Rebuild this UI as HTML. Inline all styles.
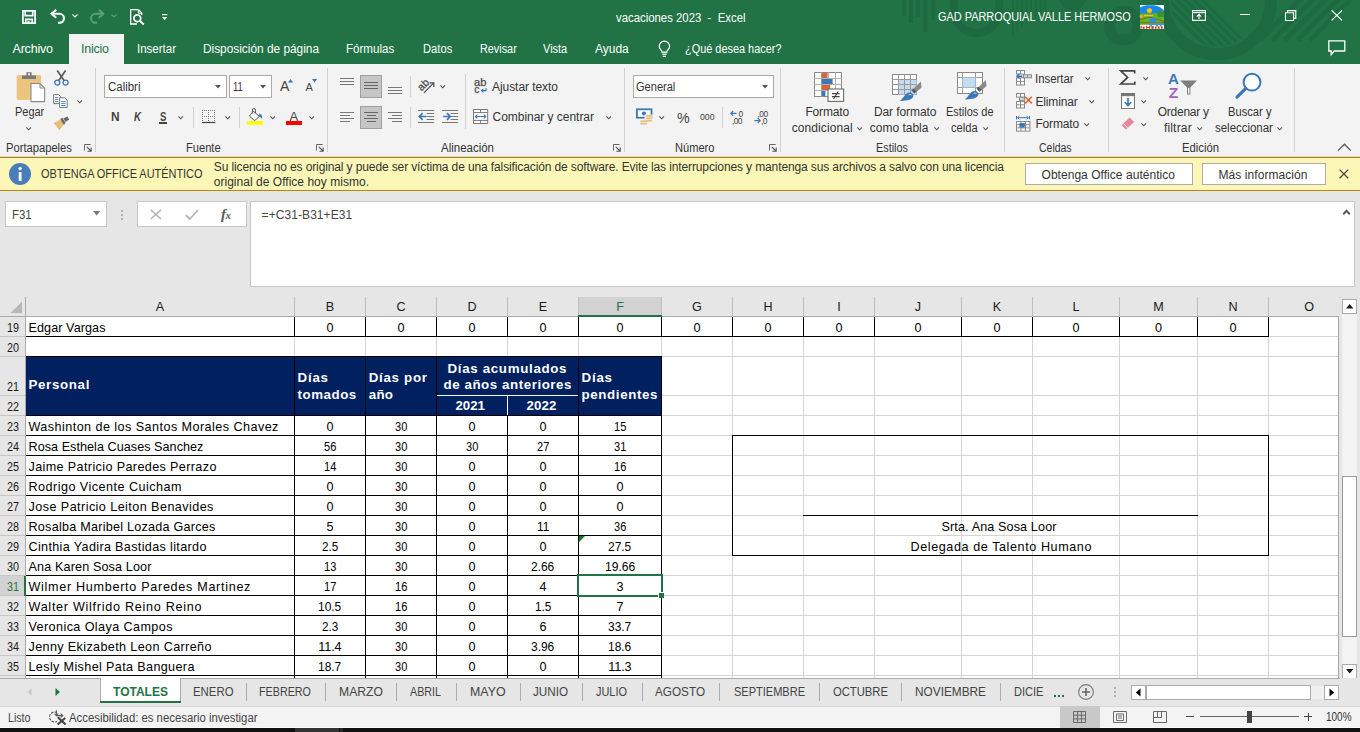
<!DOCTYPE html>
<html><head><meta charset="utf-8"><title>vacaciones 2023 - Excel</title>
<style>
html,body{margin:0;padding:0;}
body{width:1360px;height:732px;overflow:hidden;position:relative;background:#e6e6e6;font-family:"Liberation Sans",sans-serif;font-size:12px;color:#444;}
body div, body svg{position:absolute;}
svg{overflow:visible;}
</style></head><body>
<div style="left:0px;top:0px;width:1360px;height:64px;background:#217346;"></div>
<div style="left:0px;top:64px;width:1360px;height:93px;background:#f3f3f3;"></div>
<div style="left:0px;top:157px;width:1360px;height:34px;background:#fcf7b6;border-top:1px solid #b8860b;border-bottom:1px solid #b8860b;box-sizing:border-box;"></div>
<div style="left:0px;top:191px;width:1360px;height:126px;background:#e6e6e6;"></div>
<svg style="left:0;top:0;overflow:hidden" width="1360" height="64" viewBox="0 0 1360 64"><rect x="902.4" y="0" width="3.6" height="16" fill="#1d6a40"/><rect x="909" y="0" width="4.0" height="23" fill="#1d6a40"/><rect x="916" y="0" width="3.6" height="17" fill="#1d6a40"/><rect x="923.2" y="0" width="3.8" height="32" fill="#1d6a40"/><rect x="931.5" y="0" width="3.5" height="19.5" fill="#1d6a40"/><path d="M954 0 V10.5 A22.5 22.5 0 0 0 999 10.5 V0" fill="none" stroke="#1d6a40" stroke-width="8"/><rect x="1012.0" y="0" width="1.7" height="35.0" fill="#1d6a40"/><rect x="1016.6" y="0" width="1.7" height="31.4" fill="#1d6a40"/><rect x="1021.2" y="0" width="1.7" height="27.8" fill="#1d6a40"/><rect x="1025.8" y="0" width="1.7" height="24.2" fill="#1d6a40"/><rect x="1030.4" y="0" width="1.7" height="20.6" fill="#1d6a40"/><rect x="1035.0" y="0" width="1.7" height="17.0" fill="#1d6a40"/><rect x="1039.6" y="0" width="1.7" height="13.4" fill="#1d6a40"/><rect x="1044.2" y="0" width="1.7" height="9.8" fill="#1d6a40"/><circle cx="1072.6" cy="-3.5" r="14" fill="#1d6a40"/><circle cx="1123.7" cy="25.8" r="14.4" fill="none" stroke="#1d6a40" stroke-width="10.8"/><circle cx="1217" cy="0" r="54" fill="none" stroke="#1d6a40" stroke-width="12"/><clipPath id="cpin"><circle cx="1217" cy="0" r="46"/></clipPath><g clip-path="url(#cpin)"><path d="M1150.0 -10 L1220.0 60" stroke="#1d6a40" stroke-width="3"/><path d="M1158.5 -10 L1228.5 60" stroke="#1d6a40" stroke-width="3"/><path d="M1167.0 -10 L1237.0 60" stroke="#1d6a40" stroke-width="3"/><path d="M1175.5 -10 L1245.5 60" stroke="#1d6a40" stroke-width="3"/><path d="M1184.0 -10 L1254.0 60" stroke="#1d6a40" stroke-width="3"/><path d="M1192.5 -10 L1262.5 60" stroke="#1d6a40" stroke-width="3"/></g><path d="M1306.0 -6 L1260.0 40" stroke="#1d6a40" stroke-width="5"/><path d="M1318.5 -6 L1272.5 40" stroke="#1d6a40" stroke-width="5"/><path d="M1331.0 -6 L1285.0 40" stroke="#1d6a40" stroke-width="5"/><path d="M1343.5 -6 L1297.5 40" stroke="#1d6a40" stroke-width="5"/><path d="M1356.0 -6 L1310.0 40" stroke="#1d6a40" stroke-width="5"/></svg>
<svg style="left:22px;top:10px;" width="14" height="14" viewBox="0 0 14 14"><path d="M0.9 0.9 H13.1 V13.1 H0.9 Z" fill="none" stroke="#fff" stroke-width="1.8"/><path d="M3.2 1 V5.6 H10.8 V1" fill="none" stroke="#fff" stroke-width="1.7"/><path d="M3.8 13 V9.4 H10.2 V13" fill="none" stroke="#fff" stroke-width="1.7"/><rect x="5.6" y="10.8" width="2" height="2.4" fill="#fff"/></svg>
<svg style="left:50px;top:9px;" width="16" height="15" viewBox="0 0 16 15"><path d="M1.5 6 H9.5 A4.5 4.5 0 0 1 9.5 15 H8" fill="none" stroke="#fff" stroke-width="2.1" transform="translate(0,-1.2)"/><path d="M6.2 0.8 L1.6 4.8 L6.2 8.8" fill="none" stroke="#fff" stroke-width="2.1"/></svg>
<svg style="left:72px;top:14px;" width="6" height="4" viewBox="0 0 6 4"><path d="M0.5 0.5 L3 3 L5.5 0.5" fill="none" stroke="#fff" stroke-width="1.2"/></svg>
<svg style="left:89px;top:9px;" width="16" height="15" viewBox="0 0 16 15"><g transform="translate(16,0) scale(-1,1)"><path d="M1.5 6 H9.5 A4.5 4.5 0 0 1 9.5 15 H8" fill="none" stroke="#5c9e7c" stroke-width="1.9" transform="translate(0,-1.2)"/><path d="M6.2 0.8 L1.6 4.8 L6.2 8.8" fill="none" stroke="#5c9e7c" stroke-width="1.9"/></g></svg>
<svg style="left:111px;top:14px;" width="6" height="4" viewBox="0 0 6 4"><path d="M0.5 0.5 L3 3 L5.5 0.5" fill="none" stroke="#5c9e7c" stroke-width="1.2"/></svg>
<svg style="left:130px;top:9px;" width="15" height="16" viewBox="0 0 15 16"><path d="M8.5 0.7 H0.7 V15 H7" fill="none" stroke="#fff" stroke-width="1.3"/><path d="M8.5 0.7 L11.7 4 V6" fill="none" stroke="#fff" stroke-width="1.3"/><path d="M8.3 1 V4.2 H11.4" fill="none" stroke="#fff" stroke-width="1"/><circle cx="7.3" cy="9.3" r="3.4" fill="none" stroke="#fff" stroke-width="1.7"/><path d="M9.8 11.8 L13.8 15.4" stroke="#fff" stroke-width="2"/></svg>
<svg style="left:162px;top:14px;" width="6" height="7" viewBox="0 0 6 7"><path d="M0 0.6 H5.4" stroke="#fff" stroke-width="1.2"/><path d="M0 3 H5.4 L2.7 6 Z" fill="#fff"/></svg>
<div style="top:9.84px;height:16px;line-height:16px;font-size:12px;color:#fff;white-space:pre;left:615.50px;transform:scaleX(0.9471);transform-origin:0 0;">vacaciones 2023  -  Excel</div>
<div style="top:9.17px;height:16px;line-height:16px;font-size:12.5px;color:#fff;white-space:pre;left:938.30px;transform:scaleX(0.8733);transform-origin:0 0;">GAD PARROQUIAL VALLE HERMOSO</div>
<svg style="left:1140px;top:5px;" width="24" height="24" viewBox="0 0 24 24"><rect x="0" y="0" width="24" height="24" fill="#fff"/>
<path d="M0 2.4 Q3 0.4 7 0.2 H14 Q20 1 24 5.4 V10 H0 Z" fill="#1488f2"/>
<rect x="0" y="8.4" width="24" height="11.4" fill="#5cb521"/>
<path d="M17 6 L19.6 4.4 L21.4 6 L24 7 V12 H18 Z" fill="#3f8f3a"/>
<circle cx="9.4" cy="5.6" r="2.7" fill="#f4b21e"/><circle cx="9.6" cy="5.4" r="1.1" fill="#f7e04a"/>
<circle cx="1.4" cy="11.6" r="1.8" fill="#f0a23a"/>
<path d="M4 10.6 H13" stroke="#f4c430" stroke-width="1.4"/>
<path d="M0 14.6 L10 12 L24 16.4" fill="none" stroke="#8a5a2a" stroke-width="0.9"/>
<rect x="9.6" y="13.2" width="6.4" height="3.8" fill="#2f8fe6"/>
<path d="M0 17.6 L24 18" stroke="#8a5a2a" stroke-width="0.9"/>
<rect x="9" y="18.4" width="15" height="2.2" fill="#3f96ea"/>
<rect x="0" y="20.4" width="24" height="3.6" fill="#fff"/>
<g fill="#d92a1c"><rect x="0.4" y="20.8" width="1.2" height="3"/><rect x="2.6" y="21.6" width="2" height="2.2"/><rect x="6" y="20.8" width="1.2" height="3"/><rect x="7.2" y="22" width="1.8" height="0.9"/><rect x="9" y="20.8" width="1.2" height="3"/><rect x="11.4" y="21.2" width="2.4" height="2.6"/><rect x="15" y="21.6" width="1.6" height="2.2"/><rect x="18" y="21.4" width="1.6" height="2.4"/><rect x="21" y="21.4" width="1.6" height="2.4"/></g>
<g fill="#2c6b2f"><rect x="10.6" y="20.4" width="1.4" height="1"/><rect x="16" y="20.4" width="2" height="1"/><rect x="20" y="20.4" width="1.6" height="1"/></g></svg>
<svg style="left:1192px;top:10px;" width="14" height="11" viewBox="0 0 14 11"><path d="M0.6 0.6 H13.4 V10.4 H0.6 Z" fill="none" stroke="#fff" stroke-width="1.1"/><path d="M0.6 2.6 H13.4" stroke="#fff" stroke-width="1.1"/><path d="M7 9 V4.6 M4.8 6.6 L7 4.4 L9.2 6.6" fill="none" stroke="#fff" stroke-width="1.1"/></svg>
<div style="left:1240px;top:14px;width:10px;height:1px;background:#fff;"></div>
<svg style="left:1285px;top:10px;" width="12" height="11" viewBox="0 0 12 11"><path d="M0.5 2.8 H8.6 V10.5 H0.5 Z" fill="none" stroke="#fff" stroke-width="1.1"/><path d="M2.6 2.6 V0.6 H10.8 V8.4 H8.8" fill="none" stroke="#fff" stroke-width="1.1"/></svg>
<svg style="left:1331px;top:10px;" width="12" height="11" viewBox="0 0 12 11"><path d="M0.6 0.4 L11 10.4 M11 0.4 L0.6 10.4" stroke="#fff" stroke-width="1.2"/></svg>
<svg style="left:1328px;top:40px;" width="18" height="16" viewBox="0 0 18 16"><path d="M0.8 0.8 H16.8 V11 H6.2 L3.2 14.6 V11 H0.8 Z" fill="none" stroke="#fff" stroke-width="1.3"/></svg>
<div style="left:69px;top:34px;width:55px;height:30px;background:#f3f3f3;"></div>
<div style="top:40.67px;height:16px;line-height:16px;font-size:12.5px;color:#fff;white-space:pre;left:12.50px;letter-spacing:-0.198px;">Archivo</div>
<div style="top:40.67px;height:16px;line-height:16px;font-size:12.5px;color:#217346;white-space:pre;left:81.00px;letter-spacing:-0.237px;">Inicio</div>
<div style="top:40.67px;height:16px;line-height:16px;font-size:12.5px;color:#fff;white-space:pre;left:137.00px;transform:scaleX(0.9204);transform-origin:0 0;">Insertar</div>
<div style="top:40.67px;height:16px;line-height:16px;font-size:12.5px;color:#fff;white-space:pre;left:203.00px;transform:scaleX(0.9484);transform-origin:0 0;">Disposición de página</div>
<div style="top:40.67px;height:16px;line-height:16px;font-size:12.5px;color:#fff;white-space:pre;left:346.25px;transform:scaleX(0.9262);transform-origin:0 0;">Fórmulas</div>
<div style="top:40.67px;height:16px;line-height:16px;font-size:12.5px;color:#fff;white-space:pre;left:422.50px;transform:scaleX(0.8957);transform-origin:0 0;">Datos</div>
<div style="top:40.67px;height:16px;line-height:16px;font-size:12.5px;color:#fff;white-space:pre;left:479.50px;transform:scaleX(0.8673);transform-origin:0 0;">Revisar</div>
<div style="top:40.67px;height:16px;line-height:16px;font-size:12.5px;color:#fff;white-space:pre;left:543.25px;transform:scaleX(0.8788);transform-origin:0 0;">Vista</div>
<div style="top:40.67px;height:16px;line-height:16px;font-size:12.5px;color:#fff;white-space:pre;left:595.00px;transform:scaleX(0.9574);transform-origin:0 0;">Ayuda</div>
<div style="top:40.67px;height:16px;line-height:16px;font-size:12.5px;color:#fff;white-space:pre;left:684.50px;transform:scaleX(0.8733);transform-origin:0 0;">¿Qué desea hacer?</div>
<svg style="left:658px;top:41px;" width="13" height="17" viewBox="0 0 13 17"><path d="M4 11.2 C4 9 1.2 8.2 1.2 5.4 A5.2 5.2 0 0 1 11.6 5.4 C11.6 8.2 8.8 9 8.8 11.2 Z" fill="none" stroke="#fff" stroke-width="1.2"/><path d="M4.2 13.2 H8.6 M4.8 15.3 H8" stroke="#fff" stroke-width="1.2"/></svg>
<div style="left:95px;top:68px;width:1px;height:84px;background:#d0d0d0;"></div>
<div style="left:327px;top:68px;width:1px;height:84px;background:#d0d0d0;"></div>
<div style="left:624px;top:68px;width:1px;height:84px;background:#d0d0d0;"></div>
<div style="left:780px;top:68px;width:1px;height:84px;background:#d0d0d0;"></div>
<div style="left:1004px;top:68px;width:1px;height:84px;background:#d0d0d0;"></div>
<div style="left:1108px;top:68px;width:1px;height:84px;background:#d0d0d0;"></div>
<div style="left:1294px;top:68px;width:1px;height:84px;background:#d0d0d0;"></div>
<div style="left:0px;top:156px;width:1360px;height:1px;background:#d8d8d8;"></div>
<svg style="left:16px;top:71px;" width="30" height="32" viewBox="0 0 30 32"><rect x="0.7" y="4" width="24.4" height="25" rx="1.6" fill="#ebc47e"/>
<path d="M6 8 V4.6 H10.4 V1.2 H15.6 V4.6 H20 V8 Z" fill="#7a7a7a"/><rect x="12" y="2.4" width="2" height="1.8" fill="#f3f3f3"/>
<path d="M15 12.5 H24 L28.6 17 V30.6 H15 Z" fill="#fff" stroke="#8a8a8a" stroke-width="1.1"/><path d="M24 12.6 V17 H28.5" fill="none" stroke="#8a8a8a" stroke-width="1"/></svg>
<div style="top:104.44px;height:16px;line-height:16px;font-size:12px;color:#333;white-space:pre;left:14.80px;transform:scaleX(0.9122);transform-origin:0 0;">Pegar</div>
<svg style="left:26.3px;top:127px;" width="6.4" height="3.8" viewBox="0 0 6.4 3.8"><path d="M0.4 0.4 L2.70 2.80 L5.00 0.4" fill="none" stroke="#555" stroke-width="1.1"/></svg>
<svg style="left:54px;top:70px;" width="15" height="16" viewBox="0 0 15 16"><path d="M3.2 0.6 L10.4 11 M11.6 0.6 L4.4 11" stroke="#5a5a5a" stroke-width="1.7" fill="none"/>
<circle cx="3.3" cy="12.6" r="2.5" fill="none" stroke="#3b78b8" stroke-width="1.3"/><circle cx="11.6" cy="12.6" r="2.5" fill="none" stroke="#3b78b8" stroke-width="1.3"/></svg>
<svg style="left:53px;top:94px;" width="15" height="14" viewBox="0 0 15 14"><path d="M0.6 0.6 H5.6 L7.6 2.6 V9.6 H0.6 Z" fill="#fff" stroke="#777" stroke-width="1"/>
<path d="M2 3.6 H5.4 M2 5.6 H5.4 M2 7.6 H5.4" stroke="#3b78b8" stroke-width="0.9"/>
<path d="M6.6 3.8 H11.8 L14.2 6.2 V13.4 H6.6 Z" fill="#fff" stroke="#777" stroke-width="1"/>
<path d="M8.2 7.6 H12.6 M8.2 9.6 H12.6 M8.2 11.5 H12.6" stroke="#3b78b8" stroke-width="0.9"/></svg>
<svg style="left:76.6px;top:100.3px;" width="6.4" height="3.8" viewBox="0 0 6.4 3.8"><path d="M0.4 0.4 L2.70 2.80 L5.00 0.4" fill="none" stroke="#555" stroke-width="1.1"/></svg>
<svg style="left:53px;top:116px;" width="17" height="15" viewBox="0 0 17 15"><path d="M0.6 7 L7.6 3.4 L10.6 8.6 L6.4 14.2 Z" fill="#e9bd73"/>
<path d="M7.2 3 L9.4 1.8 L12.6 7.2 L10.6 8.8 Z" fill="#6a6a6a"/>
<path d="M10.4 2.6 L14.2 0.4 L16.2 3.6 L12.4 6 Z" fill="#6a6a6a"/></svg>
<div style="top:139.84px;height:16px;line-height:16px;font-size:12px;color:#333;white-space:pre;left:6.40px;transform:scaleX(0.9320);transform-origin:0 0;">Portapapeles</div>
<svg style="left:84px;top:144px;" width="8" height="8" viewBox="0 0 8 8"><path d="M0.5 6.6 V0.5 H6.6" fill="none" stroke="#666" stroke-width="1"/><path d="M2.8 2.8 L7 7 M7.2 3.4 V7.2 H3.4" fill="none" stroke="#555" stroke-width="1.1"/></svg>
<div style="left:104px;top:75px;width:123px;height:23px;background:#fff;border:1px solid #ababab;box-sizing:border-box;"></div>
<div style="top:78.54px;height:16px;line-height:16px;font-size:12px;color:#333;white-space:pre;left:107.50px;transform:scaleX(0.9553);transform-origin:0 0;">Calibri</div>
<svg style="left:215px;top:85px;" width="7" height="4" viewBox="0 0 7 4"><path d="M0 0 H6 L3 3.4 Z" fill="#555"/></svg>
<div style="left:229px;top:75px;width:43px;height:23px;background:#fff;border:1px solid #ababab;box-sizing:border-box;"></div>
<div style="top:78.54px;height:16px;line-height:16px;font-size:12px;color:#333;white-space:pre;left:232.60px;transform:scaleX(0.7871);transform-origin:0 0;">11</div>
<svg style="left:260px;top:85px;" width="7" height="4" viewBox="0 0 7 4"><path d="M0 0 H6 L3 3.4 Z" fill="#555"/></svg>
<div style="top:78.45px;height:16px;line-height:16px;font-size:14px;color:#444;white-space:pre;left:280.00px;letter-spacing:0.655px;">A</div>
<svg style="left:288px;top:79px;" width="6" height="4" viewBox="0 0 6 4"><path d="M0 3.4 L2.6 0 L5.2 3.4 Z" fill="#3b78b8"/></svg>
<div style="top:79.49px;height:16px;line-height:16px;font-size:11px;color:#444;white-space:pre;left:305.50px;letter-spacing:0.157px;">A</div>
<svg style="left:312px;top:79px;" width="6" height="4" viewBox="0 0 6 4"><path d="M0 0 L5.2 0 L2.6 3.4 Z" fill="#3b78b8"/></svg>
<div style="top:109.17px;height:16px;line-height:16px;font-size:12.5px;color:#444;white-space:pre;font-weight:bold;left:110.60px;transform:scaleX(0.9522);transform-origin:0 0;">N</div>
<div style="top:109.17px;height:16px;line-height:16px;font-size:12.5px;color:#444;white-space:pre;font-weight:bold;font-style:italic;left:134.40px;transform:scaleX(0.7745);transform-origin:0 0;">K</div>
<div style="top:109.17px;height:16px;line-height:16px;font-size:12.5px;color:#444;white-space:pre;font-weight:bold;left:159.60px;transform:scaleX(0.7670);transform-origin:0 0;">S</div>
<div style="left:159px;top:122.4px;width:8px;height:1.3px;background:#444;"></div>
<svg style="left:178.4px;top:116px;" width="6.4" height="3.8" viewBox="0 0 6.4 3.8"><path d="M0.4 0.4 L2.70 2.80 L5.00 0.4" fill="none" stroke="#555" stroke-width="1.1"/></svg>
<div style="left:193px;top:107px;width:1px;height:21px;background:#d0d0d0;"></div>
<svg style="left:202px;top:110px;" width="14" height="13" viewBox="0 0 14 13"><path d="M0 0.5 H13" stroke="#777" stroke-width="1" stroke-dasharray="1 1"/><path d="M0 6.5 H13" stroke="#777" stroke-width="1" stroke-dasharray="1 1"/><path d="M0.5 0 V12" stroke="#777" stroke-width="1" stroke-dasharray="1 1"/><path d="M6.5 0 V12" stroke="#777" stroke-width="1" stroke-dasharray="1 1"/><path d="M12.5 0 V12" stroke="#777" stroke-width="1" stroke-dasharray="1 1"/><path d="M0 12.5 H13.4" stroke="#444" stroke-width="1.2"/></svg>
<svg style="left:224.6px;top:116px;" width="6.4" height="3.8" viewBox="0 0 6.4 3.8"><path d="M0.4 0.4 L2.70 2.80 L5.00 0.4" fill="none" stroke="#555" stroke-width="1.1"/></svg>
<div style="left:239px;top:107px;width:1px;height:21px;background:#d0d0d0;"></div>
<svg style="left:247px;top:108px;" width="17" height="17" viewBox="0 0 17 17"><path d="M6.4 3.4 L12.4 8.4 L7.6 12.6 L2.4 8 Z" fill="#fff" stroke="#555" stroke-width="1"/>
<path d="M5.4 5.4 V2 A1.5 1.5 0 0 1 8.4 2 V5" fill="none" stroke="#555" stroke-width="1"/>
<path d="M12.2 5.6 C14.6 6.2 15.8 8.2 15 11 C14 9.4 13.2 8.8 12 8.4 Z" fill="#3b78b8"/>
<rect x="0" y="13" width="16" height="3.8" fill="#ffff00"/></svg>
<svg style="left:270.4px;top:116px;" width="6.4" height="3.8" viewBox="0 0 6.4 3.8"><path d="M0.4 0.4 L2.70 2.80 L5.00 0.4" fill="none" stroke="#555" stroke-width="1.1"/></svg>
<div style="top:108.50px;height:16px;line-height:16px;font-size:13px;color:#444;white-space:pre;left:289.60px;letter-spacing:0.522px;">A</div>
<div style="left:286px;top:121px;width:16px;height:3.8px;background:#ff0000;"></div>
<svg style="left:309.3px;top:116px;" width="6.4" height="3.8" viewBox="0 0 6.4 3.8"><path d="M0.4 0.4 L2.70 2.80 L5.00 0.4" fill="none" stroke="#555" stroke-width="1.1"/></svg>
<div style="top:139.84px;height:16px;line-height:16px;font-size:12px;color:#333;white-space:pre;left:185.70px;transform:scaleX(0.9264);transform-origin:0 0;">Fuente</div>
<svg style="left:316px;top:144px;" width="8" height="8" viewBox="0 0 8 8"><path d="M0.5 6.6 V0.5 H6.6" fill="none" stroke="#666" stroke-width="1"/><path d="M2.8 2.8 L7 7 M7.2 3.4 V7.2 H3.4" fill="none" stroke="#555" stroke-width="1.1"/></svg>
<div style="left:340px;top:78px;width:14px;height:1px;background:#777;"></div>
<div style="left:340px;top:81px;width:14px;height:1px;background:#777;"></div>
<div style="left:340px;top:84px;width:14px;height:1px;background:#777;"></div>
<div style="left:360px;top:75px;width:22px;height:23px;background:#c6c6c6;border:1px solid #a0a0a0;box-sizing:border-box;"></div>
<div style="left:364px;top:82px;width:14px;height:1px;background:#666;"></div>
<div style="left:364px;top:85px;width:14px;height:1px;background:#666;"></div>
<div style="left:364px;top:88px;width:14px;height:1px;background:#666;"></div>
<div style="left:388px;top:87px;width:14px;height:1px;background:#777;"></div>
<div style="left:388px;top:90px;width:14px;height:1px;background:#777;"></div>
<div style="left:388px;top:93px;width:14px;height:1px;background:#777;"></div>
<div style="left:410px;top:76px;width:1px;height:21px;background:#d0d0d0;"></div>
<svg style="left:417px;top:78px;" width="18" height="16" viewBox="0 0 18 16"><g transform="rotate(-45 6.6 6.6)"><text x="0.2" y="10" font-family="Liberation Sans" font-size="10.6" fill="#4a4a4a" stroke="#4a4a4a" stroke-width="0.25">ab</text></g>
<path d="M7 14.8 L16.4 5.2" stroke="#4a4a4a" stroke-width="1.2"/><path d="M12.6 4.8 H16.8 V9" fill="none" stroke="#4a4a4a" stroke-width="1.2"/></svg>
<svg style="left:439.6px;top:85px;" width="6.4" height="3.8" viewBox="0 0 6.4 3.8"><path d="M0.4 0.4 L2.70 2.80 L5.00 0.4" fill="none" stroke="#555" stroke-width="1.1"/></svg>
<div style="left:465px;top:74px;width:1px;height:55px;background:#d0d0d0;"></div>
<svg style="left:474px;top:78px;" width="14" height="16" viewBox="0 0 14 16"><text x="0" y="8" font-family="Liberation Sans" font-size="10.4" fill="#4a4a4a" stroke="#4a4a4a" stroke-width="0.25" textLength="12.4" lengthAdjust="spacingAndGlyphs">ab</text>
<text x="0.2" y="15" font-family="Liberation Sans" font-size="10.4" fill="#4a4a4a" stroke="#4a4a4a" stroke-width="0.25">c</text>
<path d="M12 10 V12.6 H7.6 M9.4 10.8 L7.4 12.6 L9.4 14.4" fill="none" stroke="#3b78b8" stroke-width="1.1"/></svg>
<div style="top:78.54px;height:16px;line-height:16px;font-size:12px;color:#333;white-space:pre;left:492.00px;letter-spacing:-0.057px;">Ajustar texto</div>
<div style="left:340px;top:112px;width:14px;height:1px;background:#777;"></div>
<div style="left:340px;top:115px;width:10px;height:1px;background:#777;"></div>
<div style="left:340px;top:118px;width:14px;height:1px;background:#777;"></div>
<div style="left:340px;top:121px;width:10px;height:1px;background:#777;"></div>
<div style="left:360px;top:106px;width:22px;height:23px;background:#c6c6c6;border:1px solid #a0a0a0;box-sizing:border-box;"></div>
<div style="left:364px;top:112px;width:14px;height:1px;background:#666;"></div>
<div style="left:366.5px;top:115px;width:9.0px;height:1px;background:#666;"></div>
<div style="left:364px;top:118px;width:14px;height:1px;background:#666;"></div>
<div style="left:366.5px;top:121px;width:9.0px;height:1px;background:#666;"></div>
<div style="left:388px;top:112px;width:14px;height:1px;background:#777;"></div>
<div style="left:392px;top:115px;width:10px;height:1px;background:#777;"></div>
<div style="left:388px;top:118px;width:14px;height:1px;background:#777;"></div>
<div style="left:392px;top:121px;width:10px;height:1px;background:#777;"></div>
<div style="left:410px;top:107px;width:1px;height:21px;background:#d0d0d0;"></div>
<svg style="left:418px;top:110px;" width="17" height="14" viewBox="0 0 17 14"><path d="M0 0.5 H16.2 M0 12.5 H16.2 M8.6 3.5 H16.2 M8.6 6.5 H16.2 M8.6 9.5 H16.2" stroke="#777" stroke-width="1"/><path d="M8.4 6.5 H1.6 M4.6 3.2 L1.4 6.5 L4.6 9.8" fill="none" stroke="#3b78b8" stroke-width="1.7"/></svg>
<svg style="left:442px;top:110px;" width="17" height="14" viewBox="0 0 17 14"><path d="M0 0.5 H16.2 M0 12.5 H16.2 M8.6 3.5 H16.2 M8.6 6.5 H16.2 M8.6 9.5 H16.2" stroke="#777" stroke-width="1"/><g transform="translate(9.6,0) scale(-1,1)"><path d="M8.4 6.5 H1.6 M4.6 3.2 L1.4 6.5 L4.6 9.8" fill="none" stroke="#3b78b8" stroke-width="1.7"/></g></svg>
<svg style="left:473px;top:109px;" width="16" height="15" viewBox="0 0 16 15"><path d="M0.5 0.5 H14.7 V14.5 H0.5 Z" fill="#fff" stroke="#777" stroke-width="1"/>
<path d="M0.5 3.6 H14.7 M0.5 11.4 H14.7 M7.6 0.5 V3.6 M7.6 11.4 V14.5" stroke="#777" stroke-width="1"/>
<path d="M2.4 7.5 H12.8 M4.4 5.6 L2.4 7.5 L4.4 9.4 M10.8 5.6 L12.8 7.5 L10.8 9.4" fill="none" stroke="#3b78b8" stroke-width="1.1"/></svg>
<div style="top:109.04px;height:16px;line-height:16px;font-size:12px;color:#333;white-space:pre;left:492.50px;letter-spacing:-0.031px;">Combinar y centrar</div>
<svg style="left:605.6px;top:116px;" width="6.4" height="3.8" viewBox="0 0 6.4 3.8"><path d="M0.4 0.4 L2.70 2.80 L5.00 0.4" fill="none" stroke="#555" stroke-width="1.1"/></svg>
<div style="top:139.84px;height:16px;line-height:16px;font-size:12px;color:#333;white-space:pre;left:441.00px;transform:scaleX(0.9570);transform-origin:0 0;">Alineación</div>
<svg style="left:613px;top:144px;" width="8" height="8" viewBox="0 0 8 8"><path d="M0.5 6.6 V0.5 H6.6" fill="none" stroke="#666" stroke-width="1"/><path d="M2.8 2.8 L7 7 M7.2 3.4 V7.2 H3.4" fill="none" stroke="#555" stroke-width="1.1"/></svg>
<div style="left:633px;top:75px;width:141px;height:23px;background:#fff;border:1px solid #ababab;box-sizing:border-box;"></div>
<div style="top:78.54px;height:16px;line-height:16px;font-size:12px;color:#333;white-space:pre;left:636.20px;transform:scaleX(0.9206);transform-origin:0 0;">General</div>
<svg style="left:762px;top:85px;" width="7" height="4" viewBox="0 0 7 4"><path d="M0 0 H6 L3 3.4 Z" fill="#555"/></svg>
<svg style="left:636px;top:108px;" width="17" height="18" viewBox="0 0 17 18"><rect x="0.9" y="1.3" width="14.6" height="8.4" fill="#fff" stroke="#3b78b8" stroke-width="1.8"/>
<circle cx="8" cy="5.5" r="2.1" fill="#3b78b8"/>
<rect x="8.6" y="6.6" width="8" height="7.8" fill="#f3f3f3"/>
<g fill="#e8be78"><rect x="9.6" y="7" width="6.6" height="1.7" rx="0.8"/><rect x="9.6" y="9.4" width="6.6" height="1.7" rx="0.8"/><rect x="9.6" y="11.8" width="6.6" height="1.7" rx="0.8"/>
<rect x="4.2" y="12.4" width="6.8" height="1.7" rx="0.8"/><rect x="4.2" y="14.8" width="6.8" height="1.7" rx="0.8"/></g></svg>
<svg style="left:659.3px;top:115.7px;" width="6.4" height="3.8" viewBox="0 0 6.4 3.8"><path d="M0.4 0.4 L2.70 2.80 L5.00 0.4" fill="none" stroke="#555" stroke-width="1.1"/></svg>
<div style="top:109.83px;height:16px;line-height:16px;font-size:15.5px;color:#444;white-space:pre;left:677.40px;transform:scaleX(0.9206);transform-origin:0 0;">%</div>
<div style="top:108.57px;height:16px;line-height:16px;font-size:9.6px;color:#444;white-space:pre;left:699.60px;transform:scaleX(0.9120);transform-origin:0 0;">000</div>
<div style="left:722px;top:107px;width:1px;height:21px;background:#d0d0d0;"></div>
<svg style="left:730px;top:110px;" width="15" height="15" viewBox="0 0 15 15"><text x="8.4" y="6.8" font-family="Liberation Sans" font-size="8.4" fill="#444" letter-spacing="-0.6">0</text><text x="2" y="14" font-family="Liberation Sans" font-size="8.4" fill="#444" letter-spacing="-0.6">,00</text><path d="M6.6 3.4 H0.8 M3.2 1 L0.8 3.4 L3.2 5.8" fill="none" stroke="#3b78b8" stroke-width="1.2"/></svg>
<svg style="left:754px;top:110px;" width="15" height="15" viewBox="0 0 15 15"><text x="3.6" y="6.8" font-family="Liberation Sans" font-size="8.4" fill="#444" letter-spacing="-0.6">,00</text><text x="7" y="14" font-family="Liberation Sans" font-size="8.4" fill="#444" letter-spacing="-0.6">,0</text><path d="M0.4 10.6 H6.2 M3.8 8.2 L6.2 10.6 L3.8 13" fill="none" stroke="#3b78b8" stroke-width="1.2"/></svg>
<div style="top:139.84px;height:16px;line-height:16px;font-size:12px;color:#333;white-space:pre;left:674.80px;transform:scaleX(0.9229);transform-origin:0 0;">Número</div>
<svg style="left:769px;top:144px;" width="8" height="8" viewBox="0 0 8 8"><path d="M0.5 6.6 V0.5 H6.6" fill="none" stroke="#666" stroke-width="1"/><path d="M2.8 2.8 L7 7 M7.2 3.4 V7.2 H3.4" fill="none" stroke="#555" stroke-width="1.1"/></svg>
<svg style="left:814px;top:72px;" width="30" height="30" viewBox="0 0 30 30"><rect x="0.5" y="0.5" width="27" height="24" fill="#fff" stroke="#8a8a8a"/><path d="M0.5 6.5 H27.5" stroke="#b0b0b0" stroke-width="1"/><path d="M0.5 12.5 H27.5" stroke="#b0b0b0" stroke-width="1"/><path d="M0.5 18.5 H27.5" stroke="#b0b0b0" stroke-width="1"/><path d="M7.5 0.5 V24.5" stroke="#b0b0b0" stroke-width="1"/><path d="M14.5 0.5 V24.5" stroke="#b0b0b0" stroke-width="1"/><path d="M21.5 0.5 V24.5" stroke="#b0b0b0" stroke-width="1"/><rect x="7.6" y="1" width="6" height="5" fill="#d9623b"/><rect x="7.6" y="7" width="11" height="5" fill="#3b78b8"/><rect x="7.6" y="13" width="8.6" height="5" fill="#d9623b"/><rect x="7.6" y="19" width="3.8" height="5" fill="#3b78b8"/><rect x="14" y="17" width="15.6" height="12.4" fill="#fff" stroke="#6a6a6a" stroke-width="1.1"/><path d="M18 21.6 H25.6 M18 24.6 H25.6 M24.2 19.4 L19.6 27" stroke="#444" stroke-width="1.1"/></svg>
<div style="top:104.44px;height:16px;line-height:16px;font-size:12px;color:#333;white-space:pre;left:805.40px;letter-spacing:-0.162px;">Formato</div>
<div style="top:120.24px;height:16px;line-height:16px;font-size:12px;color:#333;white-space:pre;left:791.70px;letter-spacing:0.097px;">condicional</div>
<svg style="left:857.4px;top:127px;" width="6.4" height="3.8" viewBox="0 0 6.4 3.8"><path d="M0.4 0.4 L2.70 2.80 L5.00 0.4" fill="none" stroke="#555" stroke-width="1.1"/></svg>
<svg style="left:892px;top:74px;" width="32" height="30" viewBox="0 0 32 30"><rect x="0.5" y="0.5" width="24" height="20" fill="#fff" stroke="#8a8a8a"/><rect x="6.5" y="5.5" width="18" height="15" fill="#c5dcf0"/><path d="M0.5 5.5 H24.5" stroke="#9a9a9a" stroke-width="1"/><path d="M0.5 10.5 H24.5" stroke="#9a9a9a" stroke-width="1"/><path d="M0.5 15.5 H24.5" stroke="#9a9a9a" stroke-width="1"/><path d="M6.5 0.5 V20.5" stroke="#9a9a9a" stroke-width="1"/><path d="M12.5 0.5 V20.5" stroke="#9a9a9a" stroke-width="1"/><path d="M18.5 0.5 V20.5" stroke="#9a9a9a" stroke-width="1"/><g transform="translate(7.4,5)"><path d="M14.2 9.6 L21.4 2.6 L22.2 8.6 L17 13 Z" fill="#8a8a8a"/>
<path d="M12 11.4 L14.2 9.4 L17.2 12.6 L15 14.4 Z" fill="#5a5a5a"/>
<path d="M0.4 22 C4 20 5.2 14.4 9.6 13.6 C13 13 15 16 13.4 18.6 C11.4 21.6 5 22 0.4 22 Z" fill="#3b78b8"/>
<path d="M8.4 16.4 C9.6 14.8 12 15 12.4 16.6 C11.2 16 9.8 16 8.4 16.4 Z" fill="#fff"/></g></svg>
<div style="top:104.44px;height:16px;line-height:16px;font-size:12px;color:#333;white-space:pre;left:873.90px;letter-spacing:-0.076px;">Dar formato</div>
<div style="top:120.24px;height:16px;line-height:16px;font-size:12px;color:#333;white-space:pre;left:869.80px;letter-spacing:-0.012px;">como tabla</div>
<svg style="left:933.6px;top:127px;" width="6.4" height="3.8" viewBox="0 0 6.4 3.8"><path d="M0.4 0.4 L2.70 2.80 L5.00 0.4" fill="none" stroke="#555" stroke-width="1.1"/></svg>
<svg style="left:957px;top:72px;" width="32" height="30" viewBox="0 0 32 30"><rect x="0.5" y="0.5" width="25" height="21" fill="#fff" stroke="#8a8a8a"/><path d="M0.5 5.5 H25.5 M0.5 15.5 H25.5 M5.5 0.5 V21.5 M18.5 0.5 V21.5" stroke="#9a9a9a" stroke-width="1"/><rect x="5.5" y="5.5" width="13" height="10" fill="#c5dcf0" stroke="#9ab8d8" stroke-width="0.6"/><g transform="translate(7.4,5.4)"><path d="M14.2 9.6 L21.4 2.6 L22.2 8.6 L17 13 Z" fill="#8a8a8a"/>
<path d="M12 11.4 L14.2 9.4 L17.2 12.6 L15 14.4 Z" fill="#5a5a5a"/>
<path d="M0.4 22 C4 20 5.2 14.4 9.6 13.6 C13 13 15 16 13.4 18.6 C11.4 21.6 5 22 0.4 22 Z" fill="#3b78b8"/>
<path d="M8.4 16.4 C9.6 14.8 12 15 12.4 16.6 C11.2 16 9.8 16 8.4 16.4 Z" fill="#fff"/></g></svg>
<div style="top:104.44px;height:16px;line-height:16px;font-size:12px;color:#333;white-space:pre;left:945.90px;transform:scaleX(0.9131);transform-origin:0 0;">Estilos de</div>
<div style="top:120.24px;height:16px;line-height:16px;font-size:12px;color:#333;white-space:pre;left:951.00px;transform:scaleX(0.9300);transform-origin:0 0;">celda</div>
<svg style="left:983.4px;top:127px;" width="6.4" height="3.8" viewBox="0 0 6.4 3.8"><path d="M0.4 0.4 L2.70 2.80 L5.00 0.4" fill="none" stroke="#555" stroke-width="1.1"/></svg>
<div style="top:139.84px;height:16px;line-height:16px;font-size:12px;color:#333;white-space:pre;left:876.00px;transform:scaleX(0.9055);transform-origin:0 0;">Estilos</div>
<svg style="left:1016px;top:70px;" width="17" height="16" viewBox="0 0 17 16"><rect x="0.5" y="0.5" width="8" height="3.6" fill="#fff" stroke="#8a8a8a" stroke-width="1"/><path d="M4.50 0.5 V4.1" stroke="#8a8a8a" stroke-width="1"/><rect x="0.5" y="7.8" width="8" height="7.2" fill="#fff" stroke="#8a8a8a" stroke-width="1"/><path d="M4.50 7.8 V15.0" stroke="#8a8a8a" stroke-width="1"/><path d="M0.5 11.40 H8.5" stroke="#8a8a8a" stroke-width="1"/><rect x="7.5" y="4.8" width="8" height="3" fill="#c5dcf0" stroke="#8a8a8a" stroke-width="1"/><path d="M11.5 4.8 V7.8" stroke="#8a8a8a"/><path d="M6.4 6.2 H1 M3.4 3.8 L0.9 6.2 L3.4 8.6" fill="none" stroke="#3b78b8" stroke-width="1.4"/></svg>
<div style="top:70.84px;height:16px;line-height:16px;font-size:12px;color:#333;white-space:pre;left:1035.40px;transform:scaleX(0.9489);transform-origin:0 0;">Insertar</div>
<svg style="left:1085.2px;top:77.3px;" width="6.4" height="3.8" viewBox="0 0 6.4 3.8"><path d="M0.4 0.4 L2.70 2.80 L5.00 0.4" fill="none" stroke="#555" stroke-width="1.1"/></svg>
<svg style="left:1016px;top:93px;" width="17" height="16" viewBox="0 0 17 16"><rect x="0.5" y="0.5" width="8" height="3.6" fill="#fff" stroke="#8a8a8a" stroke-width="1"/><path d="M4.50 0.5 V4.1" stroke="#8a8a8a" stroke-width="1"/><rect x="0.5" y="8.6" width="8" height="6.4" fill="#fff" stroke="#8a8a8a" stroke-width="1"/><path d="M4.50 8.6 V15.0" stroke="#8a8a8a" stroke-width="1"/><path d="M0.5 11.80 H8.5" stroke="#8a8a8a" stroke-width="1"/><rect x="3.6" y="4.6" width="5" height="3" fill="#c5dcf0" stroke="#8a8a8a" stroke-width="1"/><path d="M9.2 3.8 L15.8 10.4 M15.8 3.8 L9.2 10.4" stroke="#d9623b" stroke-width="1.5"/></svg>
<div style="top:93.84px;height:16px;line-height:16px;font-size:12px;color:#333;white-space:pre;left:1035.40px;letter-spacing:-0.136px;">Eliminar</div>
<svg style="left:1089.2px;top:100.2px;" width="6.4" height="3.8" viewBox="0 0 6.4 3.8"><path d="M0.4 0.4 L2.70 2.80 L5.00 0.4" fill="none" stroke="#555" stroke-width="1.1"/></svg>
<svg style="left:1016px;top:116px;" width="15" height="16" viewBox="0 0 15 16"><path d="M0.5 0 V3.4 M13.5 0 V3.4 M1.6 1.7 H12.4 M3.4 0.2 L1.6 1.7 L3.4 3.2 M10.6 0.2 L12.4 1.7 L10.6 3.2" fill="none" stroke="#3b78b8" stroke-width="1"/><rect x="0.5" y="5.5" width="13.4" height="9.6" fill="#fff" stroke="#8a8a8a" stroke-width="1"/><path d="M4.97 5.5 V15.1" stroke="#8a8a8a" stroke-width="1"/><path d="M9.43 5.5 V15.1" stroke="#8a8a8a" stroke-width="1"/><path d="M0.5 8.70 H13.9" stroke="#8a8a8a" stroke-width="1"/><path d="M0.5 11.90 H13.9" stroke="#8a8a8a" stroke-width="1"/><rect x="3.4" y="7" width="5.4" height="4.6" fill="#3b78b8"/></svg>
<div style="top:116.34px;height:16px;line-height:16px;font-size:12px;color:#333;white-space:pre;left:1035.40px;letter-spacing:-0.145px;">Formato</div>
<svg style="left:1084.4px;top:123.1px;" width="6.4" height="3.8" viewBox="0 0 6.4 3.8"><path d="M0.4 0.4 L2.70 2.80 L5.00 0.4" fill="none" stroke="#555" stroke-width="1.1"/></svg>
<div style="top:139.84px;height:16px;line-height:16px;font-size:12px;color:#333;white-space:pre;left:1039.40px;transform:scaleX(0.8728);transform-origin:0 0;">Celdas</div>
<svg style="left:1120px;top:70px;" width="16" height="15" viewBox="0 0 16 15"><path d="M14.6 3.4 V0.9 H0.8 L7.6 7.4 L0.8 14 H14.8 V11.4" fill="none" stroke="#444" stroke-width="1.7" stroke-linejoin="miter"/></svg>
<svg style="left:1143.2px;top:77.2px;" width="6.4" height="3.8" viewBox="0 0 6.4 3.8"><path d="M0.4 0.4 L2.70 2.80 L5.00 0.4" fill="none" stroke="#555" stroke-width="1.1"/></svg>
<svg style="left:1121px;top:93px;" width="14" height="16" viewBox="0 0 14 16"><rect x="0.5" y="0.5" width="13" height="15" fill="#fff" stroke="#777"/><rect x="0" y="0" width="14" height="3.2" fill="#777"/><path d="M7 5 V12.4 M3.8 9.2 L7 12.6 L10.2 9.2" fill="none" stroke="#3b78b8" stroke-width="1.7"/></svg>
<svg style="left:1141.4px;top:100.2px;" width="6.4" height="3.8" viewBox="0 0 6.4 3.8"><path d="M0.4 0.4 L2.70 2.80 L5.00 0.4" fill="none" stroke="#555" stroke-width="1.1"/></svg>
<svg style="left:1121px;top:117px;" width="14" height="13" viewBox="0 0 14 13"><path d="M0.4 8.2 L8.6 0.4 L13.2 5 L5 12.6 Z" fill="#e8879c"/><path d="M2.2 6.4 L6.8 11" stroke="#f3f3f3" stroke-width="0.9"/></svg>
<svg style="left:1141.4px;top:123.1px;" width="6.4" height="3.8" viewBox="0 0 6.4 3.8"><path d="M0.4 0.4 L2.70 2.80 L5.00 0.4" fill="none" stroke="#555" stroke-width="1.1"/></svg>
<div style="top:71.13px;height:16px;line-height:16px;font-size:15.5px;color:#3b78b8;white-space:pre;font-weight:bold;left:1168.20px;transform:scaleX(0.9644);transform-origin:0 0;">A</div>
<div style="top:85.33px;height:16px;line-height:16px;font-size:15.5px;color:#a45fc4;white-space:pre;font-weight:bold;left:1168.80px;letter-spacing:0.345px;">Z</div>
<svg style="left:1180px;top:80px;" width="18" height="15" viewBox="0 0 18 15"><path d="M0.2 0.4 H17 L10.4 7.4 V14.4 H7 V7.4 Z" fill="#7f7f7f"/><path d="M8 8 V13.4 H9.4 V8 Z" fill="#f3f3f3"/></svg>
<div style="top:104.44px;height:16px;line-height:16px;font-size:12px;color:#333;white-space:pre;left:1157.70px;letter-spacing:-0.246px;">Ordenar y</div>
<div style="top:120.24px;height:16px;line-height:16px;font-size:12px;color:#333;white-space:pre;left:1163.90px;letter-spacing:0.188px;">filtrar</div>
<svg style="left:1196.6px;top:127px;" width="6.4" height="3.8" viewBox="0 0 6.4 3.8"><path d="M0.4 0.4 L2.70 2.80 L5.00 0.4" fill="none" stroke="#555" stroke-width="1.1"/></svg>
<svg style="left:1235px;top:71px;" width="28" height="28" viewBox="0 0 28 28"><circle cx="17" cy="11.2" r="8.4" fill="#fff" stroke="#3b78b8" stroke-width="2"/><path d="M10.8 17.4 L2 26.2" stroke="#3b78b8" stroke-width="3.2" stroke-linecap="round"/></svg>
<div style="top:104.44px;height:16px;line-height:16px;font-size:12px;color:#333;white-space:pre;left:1227.70px;transform:scaleX(0.9319);transform-origin:0 0;">Buscar y</div>
<div style="top:120.24px;height:16px;line-height:16px;font-size:12px;color:#333;white-space:pre;left:1214.90px;transform:scaleX(0.9540);transform-origin:0 0;">seleccionar</div>
<svg style="left:1277.2px;top:127px;" width="6.4" height="3.8" viewBox="0 0 6.4 3.8"><path d="M0.4 0.4 L2.70 2.80 L5.00 0.4" fill="none" stroke="#555" stroke-width="1.1"/></svg>
<div style="top:139.84px;height:16px;line-height:16px;font-size:12px;color:#333;white-space:pre;left:1182.40px;transform:scaleX(0.9426);transform-origin:0 0;">Edición</div>
<svg style="left:1337px;top:143px;" width="15" height="9" viewBox="0 0 15 9"><path d="M1 7.6 L7.4 1.2 L13.8 7.6" fill="none" stroke="#555" stroke-width="1.3"/></svg>
<svg style="left:9px;top:163px;" width="22" height="22" viewBox="0 0 22 22"><circle cx="11" cy="11" r="11" fill="#4a7eba"/><rect x="9.7" y="9" width="2.8" height="9" fill="#fff"/><circle cx="11.1" cy="5.6" r="1.7" fill="#fff"/></svg>
<div style="top:166.34px;height:16px;line-height:16px;font-size:12px;color:#333;white-space:pre;left:40.50px;transform:scaleX(0.9106);transform-origin:0 0;">OBTENGA OFFICE AUTÉNTICO</div>
<div style="top:158.84px;height:16px;line-height:16px;font-size:12px;color:#333;white-space:pre;left:213.75px;letter-spacing:-0.119px;">Su licencia no es original y puede ser víctima de una falsificación de software. Evite las interrupciones y mantenga sus archivos a salvo con una licencia</div>
<div style="top:174.34px;height:16px;line-height:16px;font-size:12px;color:#333;white-space:pre;left:213.75px;letter-spacing:0.026px;">original de Office hoy mismo.</div>
<div style="left:1025px;top:163px;width:168px;height:22px;background:#fff;border:1px solid #ababab;box-sizing:border-box;"></div>
<div style="top:166.84px;height:16px;line-height:16px;font-size:12px;color:#333;white-space:pre;left:1041.50px;letter-spacing:0.042px;">Obtenga Office auténtico</div>
<div style="left:1202px;top:163px;width:124px;height:22px;background:#fff;border:1px solid #ababab;box-sizing:border-box;"></div>
<div style="top:166.84px;height:16px;line-height:16px;font-size:12px;color:#333;white-space:pre;left:1218.50px;letter-spacing:0.070px;">Más información</div>
<svg style="left:1339px;top:169px;" width="10" height="10" viewBox="0 0 10 10"><path d="M0.6 0.6 L9.2 9.2 M9.2 0.6 L0.6 9.2" stroke="#444" stroke-width="1.3"/></svg>
<div style="left:5px;top:201px;width:102px;height:26px;background:#fff;border:1px solid #c6c6c6;box-sizing:border-box;"></div>
<div style="top:206.84px;height:16px;line-height:16px;font-size:12px;color:#444;white-space:pre;left:12.40px;transform:scaleX(0.9482);transform-origin:0 0;">F31</div>
<svg style="left:93px;top:211px;" width="8" height="5" viewBox="0 0 8 5"><path d="M0 0 L7.4 0 L3.7 4.4 Z" fill="#777"/></svg>
<div style="left:121px;top:210px;width:2px;height:2px;background:#b0b0b0;"></div>
<div style="left:121px;top:214px;width:2px;height:2px;background:#b0b0b0;"></div>
<div style="left:121px;top:218px;width:2px;height:2px;background:#b0b0b0;"></div>
<div style="left:137px;top:201px;width:110px;height:26px;background:#fff;border:1px solid #c6c6c6;box-sizing:border-box;"></div>
<svg style="left:150px;top:209px;" width="12" height="11" viewBox="0 0 12 11"><path d="M0.8 0.8 L11 10 M11 0.8 L0.8 10" stroke="#b4b4b4" stroke-width="1.6" fill="none"/></svg>
<svg style="left:185px;top:209px;" width="14" height="11" viewBox="0 0 14 11"><path d="M0.8 6 L4.8 10 L13 1" stroke="#b4b4b4" stroke-width="1.8" fill="none"/></svg>
<div style="left:221px;top:205px;width:16px;height:18px;line-height:18px;font-family:'Liberation Serif',serif;font-style:italic;font-weight:bold;font-size:15px;color:#5a5a5a;letter-spacing:-0.5px;">f<span style="font-size:11px;">x</span></div>
<div style="left:250px;top:201px;width:1105px;height:86px;background:#fff;border:1px solid #c6c6c6;box-sizing:border-box;"></div>
<div style="top:206.84px;height:16px;line-height:16px;font-size:12px;color:#444;white-space:pre;left:261.60px;letter-spacing:0.072px;">=+C31-B31+E31</div>
<svg style="left:1341px;top:208px;" width="12" height="8" viewBox="0 0 12 8"><path d="M2.2 6.4 L5.5 2.8 L8.8 6.4" stroke="#5a5a5a" stroke-width="2" fill="none"/></svg>
<div style="left:26px;top:317px;width:1314px;height:361px;background:#fff;"></div>
<div style="left:0px;top:298px;width:1340px;height:19px;background:#e6e6e6;"></div>
<div style="left:0px;top:317px;width:26px;height:361px;background:#e6e6e6;"></div>
<div style="left:294px;top:317px;width:1px;height:361px;background:#d4d4d4;"></div>
<div style="left:365px;top:317px;width:1px;height:361px;background:#d4d4d4;"></div>
<div style="left:436px;top:317px;width:1px;height:361px;background:#d4d4d4;"></div>
<div style="left:507px;top:317px;width:1px;height:361px;background:#d4d4d4;"></div>
<div style="left:578px;top:317px;width:1px;height:361px;background:#d4d4d4;"></div>
<div style="left:661px;top:317px;width:1px;height:361px;background:#d4d4d4;"></div>
<div style="left:732px;top:317px;width:1px;height:361px;background:#d4d4d4;"></div>
<div style="left:803px;top:317px;width:1px;height:361px;background:#d4d4d4;"></div>
<div style="left:874px;top:317px;width:1px;height:361px;background:#d4d4d4;"></div>
<div style="left:961px;top:317px;width:1px;height:361px;background:#d4d4d4;"></div>
<div style="left:1032px;top:317px;width:1px;height:361px;background:#d4d4d4;"></div>
<div style="left:1119px;top:317px;width:1px;height:361px;background:#d4d4d4;"></div>
<div style="left:1197px;top:317px;width:1px;height:361px;background:#d4d4d4;"></div>
<div style="left:1268px;top:317px;width:1px;height:361px;background:#d4d4d4;"></div>
<div style="left:1339px;top:317px;width:1px;height:361px;background:#d4d4d4;"></div>
<div style="left:26px;top:336px;width:1314px;height:1px;background:#d4d4d4;"></div>
<div style="left:26px;top:356px;width:1314px;height:1px;background:#d4d4d4;"></div>
<div style="left:26px;top:395px;width:1314px;height:1px;background:#d4d4d4;"></div>
<div style="left:26px;top:415px;width:1314px;height:1px;background:#d4d4d4;"></div>
<div style="left:26px;top:435px;width:1314px;height:1px;background:#d4d4d4;"></div>
<div style="left:26px;top:455px;width:1314px;height:1px;background:#d4d4d4;"></div>
<div style="left:26px;top:475px;width:1314px;height:1px;background:#d4d4d4;"></div>
<div style="left:26px;top:495px;width:1314px;height:1px;background:#d4d4d4;"></div>
<div style="left:26px;top:515px;width:1314px;height:1px;background:#d4d4d4;"></div>
<div style="left:26px;top:535px;width:1314px;height:1px;background:#d4d4d4;"></div>
<div style="left:26px;top:555px;width:1314px;height:1px;background:#d4d4d4;"></div>
<div style="left:26px;top:575px;width:1314px;height:1px;background:#d4d4d4;"></div>
<div style="left:26px;top:595px;width:1314px;height:1px;background:#d4d4d4;"></div>
<div style="left:26px;top:615px;width:1314px;height:1px;background:#d4d4d4;"></div>
<div style="left:26px;top:635px;width:1314px;height:1px;background:#d4d4d4;"></div>
<div style="left:26px;top:655px;width:1314px;height:1px;background:#d4d4d4;"></div>
<div style="left:26px;top:675px;width:1314px;height:1px;background:#d4d4d4;"></div>
<div style="left:294px;top:297px;width:1px;height:19px;background:#bdbdbd;"></div>
<div style="left:365px;top:297px;width:1px;height:19px;background:#bdbdbd;"></div>
<div style="left:436px;top:297px;width:1px;height:19px;background:#bdbdbd;"></div>
<div style="left:507px;top:297px;width:1px;height:19px;background:#bdbdbd;"></div>
<div style="left:578px;top:297px;width:1px;height:19px;background:#bdbdbd;"></div>
<div style="left:661px;top:297px;width:1px;height:19px;background:#bdbdbd;"></div>
<div style="left:732px;top:297px;width:1px;height:19px;background:#bdbdbd;"></div>
<div style="left:803px;top:297px;width:1px;height:19px;background:#bdbdbd;"></div>
<div style="left:874px;top:297px;width:1px;height:19px;background:#bdbdbd;"></div>
<div style="left:961px;top:297px;width:1px;height:19px;background:#bdbdbd;"></div>
<div style="left:1032px;top:297px;width:1px;height:19px;background:#bdbdbd;"></div>
<div style="left:1119px;top:297px;width:1px;height:19px;background:#bdbdbd;"></div>
<div style="left:1197px;top:297px;width:1px;height:19px;background:#bdbdbd;"></div>
<div style="left:1268px;top:297px;width:1px;height:19px;background:#bdbdbd;"></div>
<div style="left:1339px;top:297px;width:1px;height:19px;background:#bdbdbd;"></div>
<div style="left:0px;top:316px;width:1339px;height:1px;background:#ababab;"></div>
<div style="left:25px;top:297px;width:1px;height:20px;background:#ababab;"></div>
<div style="left:25px;top:317px;width:1px;height:361px;background:#ababab;"></div>
<div style="left:0px;top:336px;width:25px;height:1px;background:#c6c6c6;"></div>
<div style="left:0px;top:356px;width:25px;height:1px;background:#c6c6c6;"></div>
<div style="left:0px;top:395px;width:25px;height:1px;background:#c6c6c6;"></div>
<div style="left:0px;top:415px;width:25px;height:1px;background:#c6c6c6;"></div>
<div style="left:0px;top:435px;width:25px;height:1px;background:#c6c6c6;"></div>
<div style="left:0px;top:455px;width:25px;height:1px;background:#c6c6c6;"></div>
<div style="left:0px;top:475px;width:25px;height:1px;background:#c6c6c6;"></div>
<div style="left:0px;top:495px;width:25px;height:1px;background:#c6c6c6;"></div>
<div style="left:0px;top:515px;width:25px;height:1px;background:#c6c6c6;"></div>
<div style="left:0px;top:535px;width:25px;height:1px;background:#c6c6c6;"></div>
<div style="left:0px;top:555px;width:25px;height:1px;background:#c6c6c6;"></div>
<div style="left:0px;top:575px;width:25px;height:1px;background:#c6c6c6;"></div>
<div style="left:0px;top:595px;width:25px;height:1px;background:#c6c6c6;"></div>
<div style="left:0px;top:615px;width:25px;height:1px;background:#c6c6c6;"></div>
<div style="left:0px;top:635px;width:25px;height:1px;background:#c6c6c6;"></div>
<div style="left:0px;top:655px;width:25px;height:1px;background:#c6c6c6;"></div>
<div style="left:0px;top:675px;width:25px;height:1px;background:#c6c6c6;"></div>
<svg style="left:10px;top:301px;" width="13" height="13" viewBox="0 0 13 13"><path d="M12 0.5 L12 12 L0.5 12 Z" fill="#b7b7b7"/></svg>
<div style="left:579px;top:297px;width:82px;height:19px;background:#d2d2d2;"></div>
<div style="left:578px;top:315px;width:84px;height:2px;background:#217346;"></div>
<div style="left:0px;top:576px;width:25px;height:19px;background:#d2d2d2;"></div>
<div style="left:24px;top:576px;width:2px;height:20px;background:#217346;"></div>
<div style="top:298.63px;height:16px;line-height:16px;font-size:12.6px;color:#1a1a1a;white-space:pre;left:-40.00px;width:400px;text-align:center;">A</div>
<div style="top:298.63px;height:16px;line-height:16px;font-size:12.6px;color:#1a1a1a;white-space:pre;left:130.00px;width:400px;text-align:center;">B</div>
<div style="top:298.63px;height:16px;line-height:16px;font-size:12.6px;color:#1a1a1a;white-space:pre;left:201.00px;width:400px;text-align:center;">C</div>
<div style="top:298.63px;height:16px;line-height:16px;font-size:12.6px;color:#1a1a1a;white-space:pre;left:272.00px;width:400px;text-align:center;">D</div>
<div style="top:298.63px;height:16px;line-height:16px;font-size:12.6px;color:#1a1a1a;white-space:pre;left:343.00px;width:400px;text-align:center;">E</div>
<div style="top:298.63px;height:16px;line-height:16px;font-size:12.6px;color:#217346;white-space:pre;left:420.00px;width:400px;text-align:center;">F</div>
<div style="top:298.63px;height:16px;line-height:16px;font-size:12.6px;color:#1a1a1a;white-space:pre;left:497.00px;width:400px;text-align:center;">G</div>
<div style="top:298.63px;height:16px;line-height:16px;font-size:12.6px;color:#1a1a1a;white-space:pre;left:568.00px;width:400px;text-align:center;">H</div>
<div style="top:298.63px;height:16px;line-height:16px;font-size:12.6px;color:#1a1a1a;white-space:pre;left:639.00px;width:400px;text-align:center;">I</div>
<div style="top:298.63px;height:16px;line-height:16px;font-size:12.6px;color:#1a1a1a;white-space:pre;left:718.00px;width:400px;text-align:center;">J</div>
<div style="top:298.63px;height:16px;line-height:16px;font-size:12.6px;color:#1a1a1a;white-space:pre;left:797.00px;width:400px;text-align:center;">K</div>
<div style="top:298.63px;height:16px;line-height:16px;font-size:12.6px;color:#1a1a1a;white-space:pre;left:876.00px;width:400px;text-align:center;">L</div>
<div style="top:298.63px;height:16px;line-height:16px;font-size:12.6px;color:#1a1a1a;white-space:pre;left:958.50px;width:400px;text-align:center;">M</div>
<div style="top:298.63px;height:16px;line-height:16px;font-size:12.6px;color:#1a1a1a;white-space:pre;left:1033.00px;width:400px;text-align:center;">N</div>
<div style="top:298.63px;height:16px;line-height:16px;font-size:12.6px;color:#1a1a1a;white-space:pre;left:1109.20px;width:400px;text-align:center;">O</div>
<div style="top:319.63px;height:16px;line-height:16px;font-size:12.6px;color:#1a1a1a;white-space:pre;left:7.00px;transform:scaleX(0.8561);transform-origin:0 0;">19</div>
<div style="top:339.63px;height:16px;line-height:16px;font-size:12.6px;color:#1a1a1a;white-space:pre;left:7.00px;transform:scaleX(0.8561);transform-origin:0 0;">20</div>
<div style="top:378.63px;height:16px;line-height:16px;font-size:12.6px;color:#1a1a1a;white-space:pre;left:7.00px;transform:scaleX(0.8561);transform-origin:0 0;">21</div>
<div style="top:398.63px;height:16px;line-height:16px;font-size:12.6px;color:#1a1a1a;white-space:pre;left:7.00px;transform:scaleX(0.8561);transform-origin:0 0;">22</div>
<div style="top:418.63px;height:16px;line-height:16px;font-size:12.6px;color:#1a1a1a;white-space:pre;left:7.00px;transform:scaleX(0.8561);transform-origin:0 0;">23</div>
<div style="top:438.63px;height:16px;line-height:16px;font-size:12.6px;color:#1a1a1a;white-space:pre;left:7.00px;transform:scaleX(0.8561);transform-origin:0 0;">24</div>
<div style="top:458.63px;height:16px;line-height:16px;font-size:12.6px;color:#1a1a1a;white-space:pre;left:7.00px;transform:scaleX(0.8561);transform-origin:0 0;">25</div>
<div style="top:478.63px;height:16px;line-height:16px;font-size:12.6px;color:#1a1a1a;white-space:pre;left:7.00px;transform:scaleX(0.8561);transform-origin:0 0;">26</div>
<div style="top:498.63px;height:16px;line-height:16px;font-size:12.6px;color:#1a1a1a;white-space:pre;left:7.00px;transform:scaleX(0.8561);transform-origin:0 0;">27</div>
<div style="top:518.63px;height:16px;line-height:16px;font-size:12.6px;color:#1a1a1a;white-space:pre;left:7.00px;transform:scaleX(0.8561);transform-origin:0 0;">28</div>
<div style="top:538.63px;height:16px;line-height:16px;font-size:12.6px;color:#1a1a1a;white-space:pre;left:7.00px;transform:scaleX(0.8561);transform-origin:0 0;">29</div>
<div style="top:558.63px;height:16px;line-height:16px;font-size:12.6px;color:#1a1a1a;white-space:pre;left:7.00px;transform:scaleX(0.8561);transform-origin:0 0;">30</div>
<div style="top:578.63px;height:16px;line-height:16px;font-size:12.6px;color:#217346;white-space:pre;left:7.00px;transform:scaleX(0.8561);transform-origin:0 0;">31</div>
<div style="top:598.63px;height:16px;line-height:16px;font-size:12.6px;color:#1a1a1a;white-space:pre;left:7.00px;transform:scaleX(0.8561);transform-origin:0 0;">32</div>
<div style="top:618.63px;height:16px;line-height:16px;font-size:12.6px;color:#1a1a1a;white-space:pre;left:7.00px;transform:scaleX(0.8561);transform-origin:0 0;">33</div>
<div style="top:638.63px;height:16px;line-height:16px;font-size:12.6px;color:#1a1a1a;white-space:pre;left:7.00px;transform:scaleX(0.8561);transform-origin:0 0;">34</div>
<div style="top:658.63px;height:16px;line-height:16px;font-size:12.6px;color:#1a1a1a;white-space:pre;left:7.00px;transform:scaleX(0.8561);transform-origin:0 0;">35</div>
<div style="left:26px;top:357px;width:636px;height:58px;background:#002060;"></div>
<div style="left:294px;top:357px;width:1px;height:58px;background:#000;"></div>
<div style="left:365px;top:357px;width:1px;height:58px;background:#000;"></div>
<div style="left:436px;top:357px;width:1px;height:58px;background:#000;"></div>
<div style="left:578px;top:357px;width:1px;height:58px;background:#000;"></div>
<div style="left:661px;top:357px;width:1px;height:58px;background:#000;"></div>
<div style="left:26px;top:356px;width:636px;height:1px;background:#000;"></div>
<div style="left:26px;top:415px;width:636px;height:1px;background:#000;"></div>
<div style="left:437px;top:395px;width:141px;height:1px;background:#fff;"></div>
<div style="left:507px;top:396px;width:1px;height:19px;background:#fff;"></div>
<div style="top:377.38px;height:16px;line-height:16px;font-size:13.33px;color:#fff;white-space:pre;font-weight:bold;left:28.50px;letter-spacing:0.654px;">Personal</div>
<div style="top:369.88px;height:16px;line-height:16px;font-size:13.33px;color:#fff;white-space:pre;font-weight:bold;left:297.50px;letter-spacing:0.780px;">Días</div>
<div style="top:386.78px;height:16px;line-height:16px;font-size:13.33px;color:#fff;white-space:pre;font-weight:bold;left:297.50px;letter-spacing:0.541px;">tomados</div>
<div style="top:369.88px;height:16px;line-height:16px;font-size:13.33px;color:#fff;white-space:pre;font-weight:bold;left:368.70px;letter-spacing:0.711px;">Días por</div>
<div style="top:386.78px;height:16px;line-height:16px;font-size:13.33px;color:#fff;white-space:pre;font-weight:bold;left:368.70px;letter-spacing:0.303px;">año</div>
<div style="top:361.38px;height:16px;line-height:16px;font-size:13.33px;color:#fff;white-space:pre;font-weight:bold;left:447.50px;letter-spacing:0.669px;">Días acumulados</div>
<div style="top:377.38px;height:16px;line-height:16px;font-size:13.33px;color:#fff;white-space:pre;font-weight:bold;left:443.50px;letter-spacing:0.557px;">de años anteriores</div>
<div style="top:397.88px;height:16px;line-height:16px;font-size:13.33px;color:#fff;white-space:pre;font-weight:bold;left:455.50px;letter-spacing:-0.053px;">2021</div>
<div style="top:397.88px;height:16px;line-height:16px;font-size:13.33px;color:#fff;white-space:pre;font-weight:bold;left:526.50px;letter-spacing:0.114px;">2022</div>
<div style="top:369.88px;height:16px;line-height:16px;font-size:13.33px;color:#fff;white-space:pre;font-weight:bold;left:581.50px;letter-spacing:0.780px;">Días</div>
<div style="top:386.78px;height:16px;line-height:16px;font-size:13.33px;color:#fff;white-space:pre;font-weight:bold;left:581.50px;letter-spacing:0.624px;">pendientes</div>
<div style="top:319.63px;height:16px;line-height:16px;font-size:12.6px;color:#000;white-space:pre;left:28.50px;letter-spacing:0.081px;">Edgar Vargas</div>
<div style="top:319.63px;height:16px;line-height:16px;font-size:12.6px;color:#000;white-space:pre;left:130.00px;width:400px;text-align:center;">0</div>
<div style="top:319.63px;height:16px;line-height:16px;font-size:12.6px;color:#000;white-space:pre;left:201.00px;width:400px;text-align:center;">0</div>
<div style="top:319.63px;height:16px;line-height:16px;font-size:12.6px;color:#000;white-space:pre;left:272.00px;width:400px;text-align:center;">0</div>
<div style="top:319.63px;height:16px;line-height:16px;font-size:12.6px;color:#000;white-space:pre;left:343.00px;width:400px;text-align:center;">0</div>
<div style="top:319.63px;height:16px;line-height:16px;font-size:12.6px;color:#000;white-space:pre;left:420.00px;width:400px;text-align:center;">0</div>
<div style="top:319.63px;height:16px;line-height:16px;font-size:12.6px;color:#000;white-space:pre;left:497.00px;width:400px;text-align:center;">0</div>
<div style="top:319.63px;height:16px;line-height:16px;font-size:12.6px;color:#000;white-space:pre;left:568.00px;width:400px;text-align:center;">0</div>
<div style="top:319.63px;height:16px;line-height:16px;font-size:12.6px;color:#000;white-space:pre;left:639.00px;width:400px;text-align:center;">0</div>
<div style="top:319.63px;height:16px;line-height:16px;font-size:12.6px;color:#000;white-space:pre;left:718.00px;width:400px;text-align:center;">0</div>
<div style="top:319.63px;height:16px;line-height:16px;font-size:12.6px;color:#000;white-space:pre;left:797.00px;width:400px;text-align:center;">0</div>
<div style="top:319.63px;height:16px;line-height:16px;font-size:12.6px;color:#000;white-space:pre;left:876.00px;width:400px;text-align:center;">0</div>
<div style="top:319.63px;height:16px;line-height:16px;font-size:12.6px;color:#000;white-space:pre;left:958.50px;width:400px;text-align:center;">0</div>
<div style="top:319.63px;height:16px;line-height:16px;font-size:12.6px;color:#000;white-space:pre;left:1033.00px;width:400px;text-align:center;">0</div>
<div style="top:418.63px;height:16px;line-height:16px;font-size:12.6px;color:#000;white-space:pre;left:28.50px;letter-spacing:0.447px;">Washinton de los Santos Morales Chavez</div>
<div style="top:418.63px;height:16px;line-height:16px;font-size:12.6px;color:#000;white-space:pre;left:130.00px;width:400px;text-align:center;">0</div>
<div style="top:418.63px;height:16px;line-height:16px;font-size:12.6px;color:#000;white-space:pre;left:394.85px;transform:scaleX(0.8775);transform-origin:0 0;">30</div>
<div style="top:418.63px;height:16px;line-height:16px;font-size:12.6px;color:#000;white-space:pre;left:272.00px;width:400px;text-align:center;">0</div>
<div style="top:418.63px;height:16px;line-height:16px;font-size:12.6px;color:#000;white-space:pre;left:343.00px;width:400px;text-align:center;">0</div>
<div style="top:418.63px;height:16px;line-height:16px;font-size:12.6px;color:#000;white-space:pre;left:613.85px;transform:scaleX(0.8775);transform-origin:0 0;">15</div>
<div style="top:438.63px;height:16px;line-height:16px;font-size:12.6px;color:#000;white-space:pre;left:28.50px;letter-spacing:0.050px;">Rosa Esthela Cuases Sanchez</div>
<div style="top:438.63px;height:16px;line-height:16px;font-size:12.6px;color:#000;white-space:pre;left:323.85px;transform:scaleX(0.8775);transform-origin:0 0;">56</div>
<div style="top:438.63px;height:16px;line-height:16px;font-size:12.6px;color:#000;white-space:pre;left:394.85px;transform:scaleX(0.8775);transform-origin:0 0;">30</div>
<div style="top:438.63px;height:16px;line-height:16px;font-size:12.6px;color:#000;white-space:pre;left:465.85px;transform:scaleX(0.8775);transform-origin:0 0;">30</div>
<div style="top:438.63px;height:16px;line-height:16px;font-size:12.6px;color:#000;white-space:pre;left:536.85px;transform:scaleX(0.8775);transform-origin:0 0;">27</div>
<div style="top:438.63px;height:16px;line-height:16px;font-size:12.6px;color:#000;white-space:pre;left:613.85px;transform:scaleX(0.8775);transform-origin:0 0;">31</div>
<div style="top:458.63px;height:16px;line-height:16px;font-size:12.6px;color:#000;white-space:pre;left:28.50px;letter-spacing:0.373px;">Jaime Patricio Paredes Perrazo</div>
<div style="top:458.63px;height:16px;line-height:16px;font-size:12.6px;color:#000;white-space:pre;left:323.85px;transform:scaleX(0.8775);transform-origin:0 0;">14</div>
<div style="top:458.63px;height:16px;line-height:16px;font-size:12.6px;color:#000;white-space:pre;left:394.85px;transform:scaleX(0.8775);transform-origin:0 0;">30</div>
<div style="top:458.63px;height:16px;line-height:16px;font-size:12.6px;color:#000;white-space:pre;left:272.00px;width:400px;text-align:center;">0</div>
<div style="top:458.63px;height:16px;line-height:16px;font-size:12.6px;color:#000;white-space:pre;left:343.00px;width:400px;text-align:center;">0</div>
<div style="top:458.63px;height:16px;line-height:16px;font-size:12.6px;color:#000;white-space:pre;left:613.85px;transform:scaleX(0.8775);transform-origin:0 0;">16</div>
<div style="top:478.63px;height:16px;line-height:16px;font-size:12.6px;color:#000;white-space:pre;left:28.50px;letter-spacing:0.471px;">Rodrigo Vicente Cuicham</div>
<div style="top:478.63px;height:16px;line-height:16px;font-size:12.6px;color:#000;white-space:pre;left:130.00px;width:400px;text-align:center;">0</div>
<div style="top:478.63px;height:16px;line-height:16px;font-size:12.6px;color:#000;white-space:pre;left:394.85px;transform:scaleX(0.8775);transform-origin:0 0;">30</div>
<div style="top:478.63px;height:16px;line-height:16px;font-size:12.6px;color:#000;white-space:pre;left:272.00px;width:400px;text-align:center;">0</div>
<div style="top:478.63px;height:16px;line-height:16px;font-size:12.6px;color:#000;white-space:pre;left:343.00px;width:400px;text-align:center;">0</div>
<div style="top:478.63px;height:16px;line-height:16px;font-size:12.6px;color:#000;white-space:pre;left:420.00px;width:400px;text-align:center;">0</div>
<div style="top:498.63px;height:16px;line-height:16px;font-size:12.6px;color:#000;white-space:pre;left:28.50px;letter-spacing:0.438px;">Jose Patricio Leiton Benavides</div>
<div style="top:498.63px;height:16px;line-height:16px;font-size:12.6px;color:#000;white-space:pre;left:130.00px;width:400px;text-align:center;">0</div>
<div style="top:498.63px;height:16px;line-height:16px;font-size:12.6px;color:#000;white-space:pre;left:394.85px;transform:scaleX(0.8775);transform-origin:0 0;">30</div>
<div style="top:498.63px;height:16px;line-height:16px;font-size:12.6px;color:#000;white-space:pre;left:272.00px;width:400px;text-align:center;">0</div>
<div style="top:498.63px;height:16px;line-height:16px;font-size:12.6px;color:#000;white-space:pre;left:343.00px;width:400px;text-align:center;">0</div>
<div style="top:498.63px;height:16px;line-height:16px;font-size:12.6px;color:#000;white-space:pre;left:420.00px;width:400px;text-align:center;">0</div>
<div style="top:518.63px;height:16px;line-height:16px;font-size:12.6px;color:#000;white-space:pre;left:28.50px;letter-spacing:0.250px;">Rosalba Maribel Lozada Garces</div>
<div style="top:518.63px;height:16px;line-height:16px;font-size:12.6px;color:#000;white-space:pre;left:130.00px;width:400px;text-align:center;">5</div>
<div style="top:518.63px;height:16px;line-height:16px;font-size:12.6px;color:#000;white-space:pre;left:394.85px;transform:scaleX(0.8775);transform-origin:0 0;">30</div>
<div style="top:518.63px;height:16px;line-height:16px;font-size:12.6px;color:#000;white-space:pre;left:272.00px;width:400px;text-align:center;">0</div>
<div style="top:518.63px;height:16px;line-height:16px;font-size:12.6px;color:#000;white-space:pre;left:536.85px;transform:scaleX(0.9409);transform-origin:0 0;">11</div>
<div style="top:518.63px;height:16px;line-height:16px;font-size:12.6px;color:#000;white-space:pre;left:613.85px;transform:scaleX(0.8775);transform-origin:0 0;">36</div>
<div style="top:538.63px;height:16px;line-height:16px;font-size:12.6px;color:#000;white-space:pre;left:28.50px;letter-spacing:0.345px;">Cinthia Yadira Bastidas litardo</div>
<div style="top:538.63px;height:16px;line-height:16px;font-size:12.6px;color:#000;white-space:pre;left:321.85px;transform:scaleX(0.9307);transform-origin:0 0;">2.5</div>
<div style="top:538.63px;height:16px;line-height:16px;font-size:12.6px;color:#000;white-space:pre;left:394.85px;transform:scaleX(0.8775);transform-origin:0 0;">30</div>
<div style="top:538.63px;height:16px;line-height:16px;font-size:12.6px;color:#000;white-space:pre;left:272.00px;width:400px;text-align:center;">0</div>
<div style="top:538.63px;height:16px;line-height:16px;font-size:12.6px;color:#000;white-space:pre;left:343.00px;width:400px;text-align:center;">0</div>
<div style="top:538.63px;height:16px;line-height:16px;font-size:12.6px;color:#000;white-space:pre;left:608.35px;transform:scaleX(0.9495);transform-origin:0 0;">27.5</div>
<div style="top:558.63px;height:16px;line-height:16px;font-size:12.6px;color:#000;white-space:pre;left:28.50px;letter-spacing:0.140px;">Ana Karen Sosa Loor</div>
<div style="top:558.63px;height:16px;line-height:16px;font-size:12.6px;color:#000;white-space:pre;left:323.85px;transform:scaleX(0.8775);transform-origin:0 0;">13</div>
<div style="top:558.63px;height:16px;line-height:16px;font-size:12.6px;color:#000;white-space:pre;left:394.85px;transform:scaleX(0.8775);transform-origin:0 0;">30</div>
<div style="top:558.63px;height:16px;line-height:16px;font-size:12.6px;color:#000;white-space:pre;left:272.00px;width:400px;text-align:center;">0</div>
<div style="top:558.63px;height:16px;line-height:16px;font-size:12.6px;color:#000;white-space:pre;left:531.35px;transform:scaleX(0.9495);transform-origin:0 0;">2.66</div>
<div style="top:558.63px;height:16px;line-height:16px;font-size:12.6px;color:#000;white-space:pre;left:604.85px;transform:scaleX(0.9609);transform-origin:0 0;">19.66</div>
<div style="top:578.63px;height:16px;line-height:16px;font-size:12.6px;color:#000;white-space:pre;left:28.50px;letter-spacing:0.701px;">Wilmer Humberto Paredes Martinez</div>
<div style="top:578.63px;height:16px;line-height:16px;font-size:12.6px;color:#000;white-space:pre;left:323.85px;transform:scaleX(0.8775);transform-origin:0 0;">17</div>
<div style="top:578.63px;height:16px;line-height:16px;font-size:12.6px;color:#000;white-space:pre;left:394.85px;transform:scaleX(0.8775);transform-origin:0 0;">16</div>
<div style="top:578.63px;height:16px;line-height:16px;font-size:12.6px;color:#000;white-space:pre;left:272.00px;width:400px;text-align:center;">0</div>
<div style="top:578.63px;height:16px;line-height:16px;font-size:12.6px;color:#000;white-space:pre;left:343.00px;width:400px;text-align:center;">4</div>
<div style="top:578.63px;height:16px;line-height:16px;font-size:12.6px;color:#000;white-space:pre;left:420.00px;width:400px;text-align:center;">3</div>
<div style="top:598.63px;height:16px;line-height:16px;font-size:12.6px;color:#000;white-space:pre;left:28.50px;letter-spacing:0.720px;">Walter Wilfrido Reino Reino</div>
<div style="top:598.63px;height:16px;line-height:16px;font-size:12.6px;color:#000;white-space:pre;left:318.35px;transform:scaleX(0.9495);transform-origin:0 0;">10.5</div>
<div style="top:598.63px;height:16px;line-height:16px;font-size:12.6px;color:#000;white-space:pre;left:394.85px;transform:scaleX(0.8775);transform-origin:0 0;">16</div>
<div style="top:598.63px;height:16px;line-height:16px;font-size:12.6px;color:#000;white-space:pre;left:272.00px;width:400px;text-align:center;">0</div>
<div style="top:598.63px;height:16px;line-height:16px;font-size:12.6px;color:#000;white-space:pre;left:534.85px;transform:scaleX(0.9307);transform-origin:0 0;">1.5</div>
<div style="top:598.63px;height:16px;line-height:16px;font-size:12.6px;color:#000;white-space:pre;left:420.00px;width:400px;text-align:center;">7</div>
<div style="top:618.63px;height:16px;line-height:16px;font-size:12.6px;color:#000;white-space:pre;left:28.50px;letter-spacing:0.407px;">Veronica Olaya Campos</div>
<div style="top:618.63px;height:16px;line-height:16px;font-size:12.6px;color:#000;white-space:pre;left:321.85px;transform:scaleX(0.9307);transform-origin:0 0;">2.3</div>
<div style="top:618.63px;height:16px;line-height:16px;font-size:12.6px;color:#000;white-space:pre;left:394.85px;transform:scaleX(0.8775);transform-origin:0 0;">30</div>
<div style="top:618.63px;height:16px;line-height:16px;font-size:12.6px;color:#000;white-space:pre;left:272.00px;width:400px;text-align:center;">0</div>
<div style="top:618.63px;height:16px;line-height:16px;font-size:12.6px;color:#000;white-space:pre;left:343.00px;width:400px;text-align:center;">6</div>
<div style="top:618.63px;height:16px;line-height:16px;font-size:12.6px;color:#000;white-space:pre;left:608.35px;transform:scaleX(0.9495);transform-origin:0 0;">33.7</div>
<div style="top:638.63px;height:16px;line-height:16px;font-size:12.6px;color:#000;white-space:pre;left:28.50px;letter-spacing:0.369px;">Jenny Ekizabeth Leon Carreño</div>
<div style="top:638.63px;height:16px;line-height:16px;font-size:12.6px;color:#000;white-space:pre;left:318.35px;letter-spacing:-0.098px;">11.4</div>
<div style="top:638.63px;height:16px;line-height:16px;font-size:12.6px;color:#000;white-space:pre;left:394.85px;transform:scaleX(0.8775);transform-origin:0 0;">30</div>
<div style="top:638.63px;height:16px;line-height:16px;font-size:12.6px;color:#000;white-space:pre;left:272.00px;width:400px;text-align:center;">0</div>
<div style="top:638.63px;height:16px;line-height:16px;font-size:12.6px;color:#000;white-space:pre;left:531.35px;transform:scaleX(0.9495);transform-origin:0 0;">3.96</div>
<div style="top:638.63px;height:16px;line-height:16px;font-size:12.6px;color:#000;white-space:pre;left:608.35px;transform:scaleX(0.9495);transform-origin:0 0;">18.6</div>
<div style="top:658.63px;height:16px;line-height:16px;font-size:12.6px;color:#000;white-space:pre;left:28.50px;letter-spacing:0.364px;">Lesly Mishel Pata Banguera</div>
<div style="top:658.63px;height:16px;line-height:16px;font-size:12.6px;color:#000;white-space:pre;left:318.35px;transform:scaleX(0.9495);transform-origin:0 0;">18.7</div>
<div style="top:658.63px;height:16px;line-height:16px;font-size:12.6px;color:#000;white-space:pre;left:394.85px;transform:scaleX(0.8775);transform-origin:0 0;">30</div>
<div style="top:658.63px;height:16px;line-height:16px;font-size:12.6px;color:#000;white-space:pre;left:272.00px;width:400px;text-align:center;">0</div>
<div style="top:658.63px;height:16px;line-height:16px;font-size:12.6px;color:#000;white-space:pre;left:343.00px;width:400px;text-align:center;">0</div>
<div style="top:658.63px;height:16px;line-height:16px;font-size:12.6px;color:#000;white-space:pre;left:608.35px;letter-spacing:-0.098px;">11.3</div>
<div style="left:26px;top:336px;width:1243px;height:1px;background:#000;"></div>
<div style="left:294px;top:317px;width:1px;height:20px;background:#000;"></div>
<div style="left:365px;top:317px;width:1px;height:20px;background:#000;"></div>
<div style="left:436px;top:317px;width:1px;height:20px;background:#000;"></div>
<div style="left:507px;top:317px;width:1px;height:20px;background:#000;"></div>
<div style="left:578px;top:317px;width:1px;height:20px;background:#000;"></div>
<div style="left:661px;top:317px;width:1px;height:20px;background:#000;"></div>
<div style="left:732px;top:317px;width:1px;height:20px;background:#000;"></div>
<div style="left:803px;top:317px;width:1px;height:20px;background:#000;"></div>
<div style="left:874px;top:317px;width:1px;height:20px;background:#000;"></div>
<div style="left:961px;top:317px;width:1px;height:20px;background:#000;"></div>
<div style="left:1032px;top:317px;width:1px;height:20px;background:#000;"></div>
<div style="left:1119px;top:317px;width:1px;height:20px;background:#000;"></div>
<div style="left:1197px;top:317px;width:1px;height:20px;background:#000;"></div>
<div style="left:1268px;top:317px;width:1px;height:20px;background:#000;"></div>
<div style="left:26px;top:435px;width:636px;height:1px;background:#000;"></div>
<div style="left:26px;top:455px;width:636px;height:1px;background:#000;"></div>
<div style="left:26px;top:475px;width:636px;height:1px;background:#000;"></div>
<div style="left:26px;top:495px;width:636px;height:1px;background:#000;"></div>
<div style="left:26px;top:515px;width:636px;height:1px;background:#000;"></div>
<div style="left:26px;top:535px;width:636px;height:1px;background:#000;"></div>
<div style="left:26px;top:555px;width:636px;height:1px;background:#000;"></div>
<div style="left:26px;top:575px;width:636px;height:1px;background:#000;"></div>
<div style="left:26px;top:595px;width:636px;height:1px;background:#000;"></div>
<div style="left:26px;top:615px;width:636px;height:1px;background:#000;"></div>
<div style="left:26px;top:635px;width:636px;height:1px;background:#000;"></div>
<div style="left:26px;top:655px;width:636px;height:1px;background:#000;"></div>
<div style="left:26px;top:675px;width:636px;height:1px;background:#000;"></div>
<div style="left:294px;top:416px;width:1px;height:262px;background:#000;"></div>
<div style="left:365px;top:416px;width:1px;height:262px;background:#000;"></div>
<div style="left:436px;top:416px;width:1px;height:262px;background:#000;"></div>
<div style="left:507px;top:416px;width:1px;height:262px;background:#000;"></div>
<div style="left:578px;top:416px;width:1px;height:262px;background:#000;"></div>
<div style="left:661px;top:416px;width:1px;height:262px;background:#000;"></div>
<div style="left:732px;top:435px;width:537px;height:1px;background:#000;"></div>
<div style="left:732px;top:555px;width:537px;height:1px;background:#000;"></div>
<div style="left:732px;top:435px;width:1px;height:121px;background:#000;"></div>
<div style="left:1268px;top:435px;width:1px;height:121px;background:#000;"></div>
<div style="left:803px;top:515px;width:395px;height:1px;background:#000;"></div>
<div style="top:518.63px;height:16px;line-height:16px;font-size:12.6px;color:#000;white-space:pre;left:941.50px;letter-spacing:0.124px;">Srta. Ana Sosa Loor</div>
<div style="top:538.63px;height:16px;line-height:16px;font-size:12.6px;color:#000;white-space:pre;left:910.50px;letter-spacing:0.580px;">Delegada de Talento Humano</div>
<svg style="left:579px;top:536px;" width="7" height="7" viewBox="0 0 7 7"><path d="M0 0 L6 0 L0 6 Z" fill="#0f7d14"/></svg>
<div style="left:577px;top:574px;width:86px;height:23px;border:2px solid #217346;box-sizing:border-box;"></div>
<div style="left:658px;top:592px;width:6px;height:6px;background:#fff;"></div>
<div style="left:659px;top:593px;width:5px;height:5px;background:#217346;"></div>
<div style="left:1339px;top:298px;width:21px;height:381px;background:#e6e6e6;"></div>
<div style="left:1338px;top:317px;width:1px;height:362px;background:#a6a6a6;"></div>
<div style="left:1342px;top:314px;width:15px;height:350px;background:#f3f3f3;"></div>
<div style="left:1342px;top:299px;width:15px;height:15px;background:#fff;border:1px solid #ababab;box-sizing:border-box;"></div>
<svg style="left:1346px;top:304px;" width="8" height="5" viewBox="0 0 8 5"><path d="M0 4.4 L3.7 0 L7.4 4.4 Z" fill="#1a1a1a"/></svg>
<div style="left:1342px;top:664px;width:15px;height:15px;background:#fff;border:1px solid #ababab;box-sizing:border-box;"></div>
<svg style="left:1346px;top:669px;" width="8" height="5" viewBox="0 0 8 5"><path d="M0 0 L7.4 0 L3.7 4.4 Z" fill="#1a1a1a"/></svg>
<div style="left:1342px;top:476px;width:15px;height:161px;background:#fff;border:1px solid #9a9a9a;box-sizing:border-box;"></div>
<div style="left:0px;top:678px;width:1360px;height:28px;background:#e6e6e6;"></div>
<div style="left:0px;top:678px;width:101px;height:1px;background:#ababab;"></div>
<div style="left:180px;top:678px;width:1160px;height:1px;background:#ababab;"></div>
<div style="left:0px;top:706px;width:1360px;height:22px;background:#f3f3f3;"></div>
<div style="left:0px;top:706px;width:1360px;height:1px;background:#d9d9d9;"></div>
<div style="left:0px;top:727px;width:1360px;height:1px;background:#fafafa;"></div>
<div style="left:0px;top:728px;width:1360px;height:4px;background:#101010;"></div>
<div style="left:295px;top:728px;width:44px;height:4px;background:#333;"></div>
<div style="left:340px;top:728px;width:3px;height:4px;background:#2a2a2a;"></div>
<div style="left:101px;top:676px;width:79px;height:27px;background:#fff;"></div>
<div style="left:100px;top:678px;width:1px;height:25px;background:#ababab;"></div>
<div style="left:180px;top:678px;width:1px;height:25px;background:#ababab;"></div>
<div style="left:100px;top:701px;width:81px;height:2px;background:#217346;"></div>
<div style="top:683.72px;height:16px;line-height:16px;font-size:13.5px;color:#217346;white-space:pre;font-weight:bold;left:112.50px;transform:scaleX(0.8905);transform-origin:0 0;">TOTALES</div>
<div style="top:683.50px;height:16px;line-height:16px;font-size:13px;color:#444;white-space:pre;left:192.50px;transform:scaleX(0.8763);transform-origin:0 0;">ENERO</div>
<div style="top:683.50px;height:16px;line-height:16px;font-size:13px;color:#444;white-space:pre;left:259.00px;transform:scaleX(0.8273);transform-origin:0 0;">FEBRERO</div>
<div style="top:683.50px;height:16px;line-height:16px;font-size:13px;color:#444;white-space:pre;left:338.50px;transform:scaleX(0.9376);transform-origin:0 0;">MARZO</div>
<div style="top:683.50px;height:16px;line-height:16px;font-size:13px;color:#444;white-space:pre;left:410.00px;transform:scaleX(0.8251);transform-origin:0 0;">ABRIL</div>
<div style="top:683.50px;height:16px;line-height:16px;font-size:13px;color:#444;white-space:pre;left:469.50px;transform:scaleX(0.9515);transform-origin:0 0;">MAYO</div>
<div style="top:683.50px;height:16px;line-height:16px;font-size:13px;color:#444;white-space:pre;left:533.00px;transform:scaleX(0.8974);transform-origin:0 0;">JUNIO</div>
<div style="top:683.50px;height:16px;line-height:16px;font-size:13px;color:#444;white-space:pre;left:596.00px;transform:scaleX(0.8411);transform-origin:0 0;">JULIO</div>
<div style="top:683.50px;height:16px;line-height:16px;font-size:13px;color:#444;white-space:pre;left:655.00px;transform:scaleX(0.9029);transform-origin:0 0;">AGOSTO</div>
<div style="top:683.50px;height:16px;line-height:16px;font-size:13px;color:#444;white-space:pre;left:733.50px;transform:scaleX(0.8474);transform-origin:0 0;">SEPTIEMBRE</div>
<div style="top:683.50px;height:16px;line-height:16px;font-size:13px;color:#444;white-space:pre;left:832.50px;transform:scaleX(0.8652);transform-origin:0 0;">OCTUBRE</div>
<div style="top:683.50px;height:16px;line-height:16px;font-size:13px;color:#444;white-space:pre;left:914.50px;transform:scaleX(0.9103);transform-origin:0 0;">NOVIEMBRE</div>
<div style="top:683.50px;height:16px;line-height:16px;font-size:13px;color:#444;white-space:pre;left:1014.00px;transform:scaleX(0.8507);transform-origin:0 0;">DICIE</div>
<div style="left:246px;top:683px;width:1px;height:18px;background:#ababab;"></div>
<div style="left:325px;top:683px;width:1px;height:18px;background:#ababab;"></div>
<div style="left:396px;top:683px;width:1px;height:18px;background:#ababab;"></div>
<div style="left:456px;top:683px;width:1px;height:18px;background:#ababab;"></div>
<div style="left:520px;top:683px;width:1px;height:18px;background:#ababab;"></div>
<div style="left:582px;top:683px;width:1px;height:18px;background:#ababab;"></div>
<div style="left:642px;top:683px;width:1px;height:18px;background:#ababab;"></div>
<div style="left:719px;top:683px;width:1px;height:18px;background:#ababab;"></div>
<div style="left:819px;top:683px;width:1px;height:18px;background:#ababab;"></div>
<div style="left:901px;top:683px;width:1px;height:18px;background:#ababab;"></div>
<div style="left:1000px;top:683px;width:1px;height:18px;background:#ababab;"></div>
<div style="left:1054px;top:695px;width:2px;height:2px;background:#217346;"></div>
<div style="left:1058px;top:695px;width:2px;height:2px;background:#217346;"></div>
<div style="left:1062px;top:695px;width:2px;height:2px;background:#217346;"></div>
<svg style="left:27px;top:688px;" width="5" height="8" viewBox="0 0 5 8"><path d="M4.5 0.5 L4.5 7.5 L0.5 4 Z" fill="#c6c6c6"/></svg>
<svg style="left:55px;top:688px;" width="6" height="8" viewBox="0 0 6 8"><path d="M0.5 0 L0.5 8 L5 4 Z" fill="#217346"/></svg>
<svg style="left:1077px;top:683px;" width="18" height="18" viewBox="0 0 18 18"><circle cx="9" cy="9" r="7.4" fill="none" stroke="#777" stroke-width="1.1"/><path d="M9 5 V13 M5 9 H13" stroke="#666" stroke-width="1.6"/></svg>
<div style="left:1114px;top:687px;width:2px;height:2px;background:#b0b0b0;"></div>
<div style="left:1114px;top:691px;width:2px;height:2px;background:#b0b0b0;"></div>
<div style="left:1114px;top:695px;width:2px;height:2px;background:#b0b0b0;"></div>
<div style="left:1131px;top:685px;width:15px;height:15px;background:#fff;border:1px solid #ababab;box-sizing:border-box;"></div>
<svg style="left:1135px;top:688px;" width="7" height="9" viewBox="0 0 7 9"><path d="M5.5 0.5 L5.5 8.5 L0.8 4.5 Z" fill="#000"/></svg>
<div style="left:1146px;top:685px;width:165px;height:15px;background:#fff;border:1px solid #ababab;box-sizing:border-box;"></div>
<div style="left:1311px;top:686px;width:13px;height:13px;background:#f0f0f0;"></div>
<div style="left:1324px;top:685px;width:15px;height:15px;background:#fff;border:1px solid #ababab;box-sizing:border-box;"></div>
<svg style="left:1328px;top:688px;" width="7" height="9" viewBox="0 0 7 9"><path d="M1.5 0.5 L1.5 8.5 L6.2 4.5 Z" fill="#000"/></svg>
<div style="top:709.84px;height:16px;line-height:16px;font-size:12px;color:#444;white-space:pre;left:7.50px;transform:scaleX(0.8876);transform-origin:0 0;">Listo</div>
<svg style="left:49px;top:709px;" width="18" height="17" viewBox="0 0 18 17"><path d="M8 3.6 A5 5 0 1 0 8 12.4" fill="none" stroke="#5a5a5a" stroke-width="1.1" stroke-dasharray="2.6 1.1"/><path d="M7.4 1.2 V6.4 M5.6 4.6 L7.4 6.6 L9.2 4.6" fill="none" stroke="#5a5a5a" stroke-width="1.1"/><path d="M7.4 6.6 H13.4 M11.6 4.6 L13.8 6.6 L11.6 8.6" fill="none" stroke="#5a5a5a" stroke-width="1.1"/><path d="M8.8 8.2 L16.6 15.6 M16.2 9 L8.6 15.6" stroke="#444" stroke-width="2"/></svg>
<div style="top:709.84px;height:16px;line-height:16px;font-size:12px;color:#444;white-space:pre;left:69.00px;transform:scaleX(0.9451);transform-origin:0 0;">Accesibilidad: es necesario investigar</div>
<div style="left:1060px;top:706px;width:40px;height:22px;background:#c8c8c8;"></div>
<svg style="left:1073px;top:711px;" width="13" height="12" viewBox="0 0 13 12"><path d="M0.5 0.5 H12.5 V11.5 H0.5 Z M0.5 4.2 H12.5 M0.5 7.9 H12.5 M4.5 0.5 V11.5 M8.5 0.5 V11.5" fill="none" stroke="#6a6a6a" stroke-width="1"/></svg>
<svg style="left:1113px;top:711px;" width="14" height="12" viewBox="0 0 14 12"><path d="M0.5 0.5 H13.5 V11.5 H0.5 Z" fill="none" stroke="#6a6a6a" stroke-width="1"/><path d="M3.5 3 H10.5 V9.5 H3.5 Z M5 5 H9 M5 7 H9" fill="none" stroke="#6a6a6a" stroke-width="1"/></svg>
<svg style="left:1153px;top:711px;" width="14" height="12" viewBox="0 0 14 12"><path d="M0.5 0.5 H13.5 V11.5 H0.5 Z M4.5 0.5 V6.5 M0.5 6.5 H8.5 V0.5" fill="none" stroke="#6a6a6a" stroke-width="1"/></svg>
<div style="left:1186px;top:716px;width:8px;height:1px;background:#444;"></div>
<div style="left:1200px;top:716px;width:99px;height:1px;background:#666;"></div>
<div style="left:1247px;top:711px;width:5px;height:12px;background:#444;"></div>
<div style="left:1304px;top:716px;width:8px;height:1px;background:#444;"></div>
<div style="left:1307.5px;top:712.5px;width:1px;height:8px;background:#444;"></div>
<div style="top:708.67px;height:16px;line-height:16px;font-size:12.5px;color:#333;white-space:pre;left:1326.00px;transform:scaleX(0.7977);transform-origin:0 0;">100%</div>
</body></html>
